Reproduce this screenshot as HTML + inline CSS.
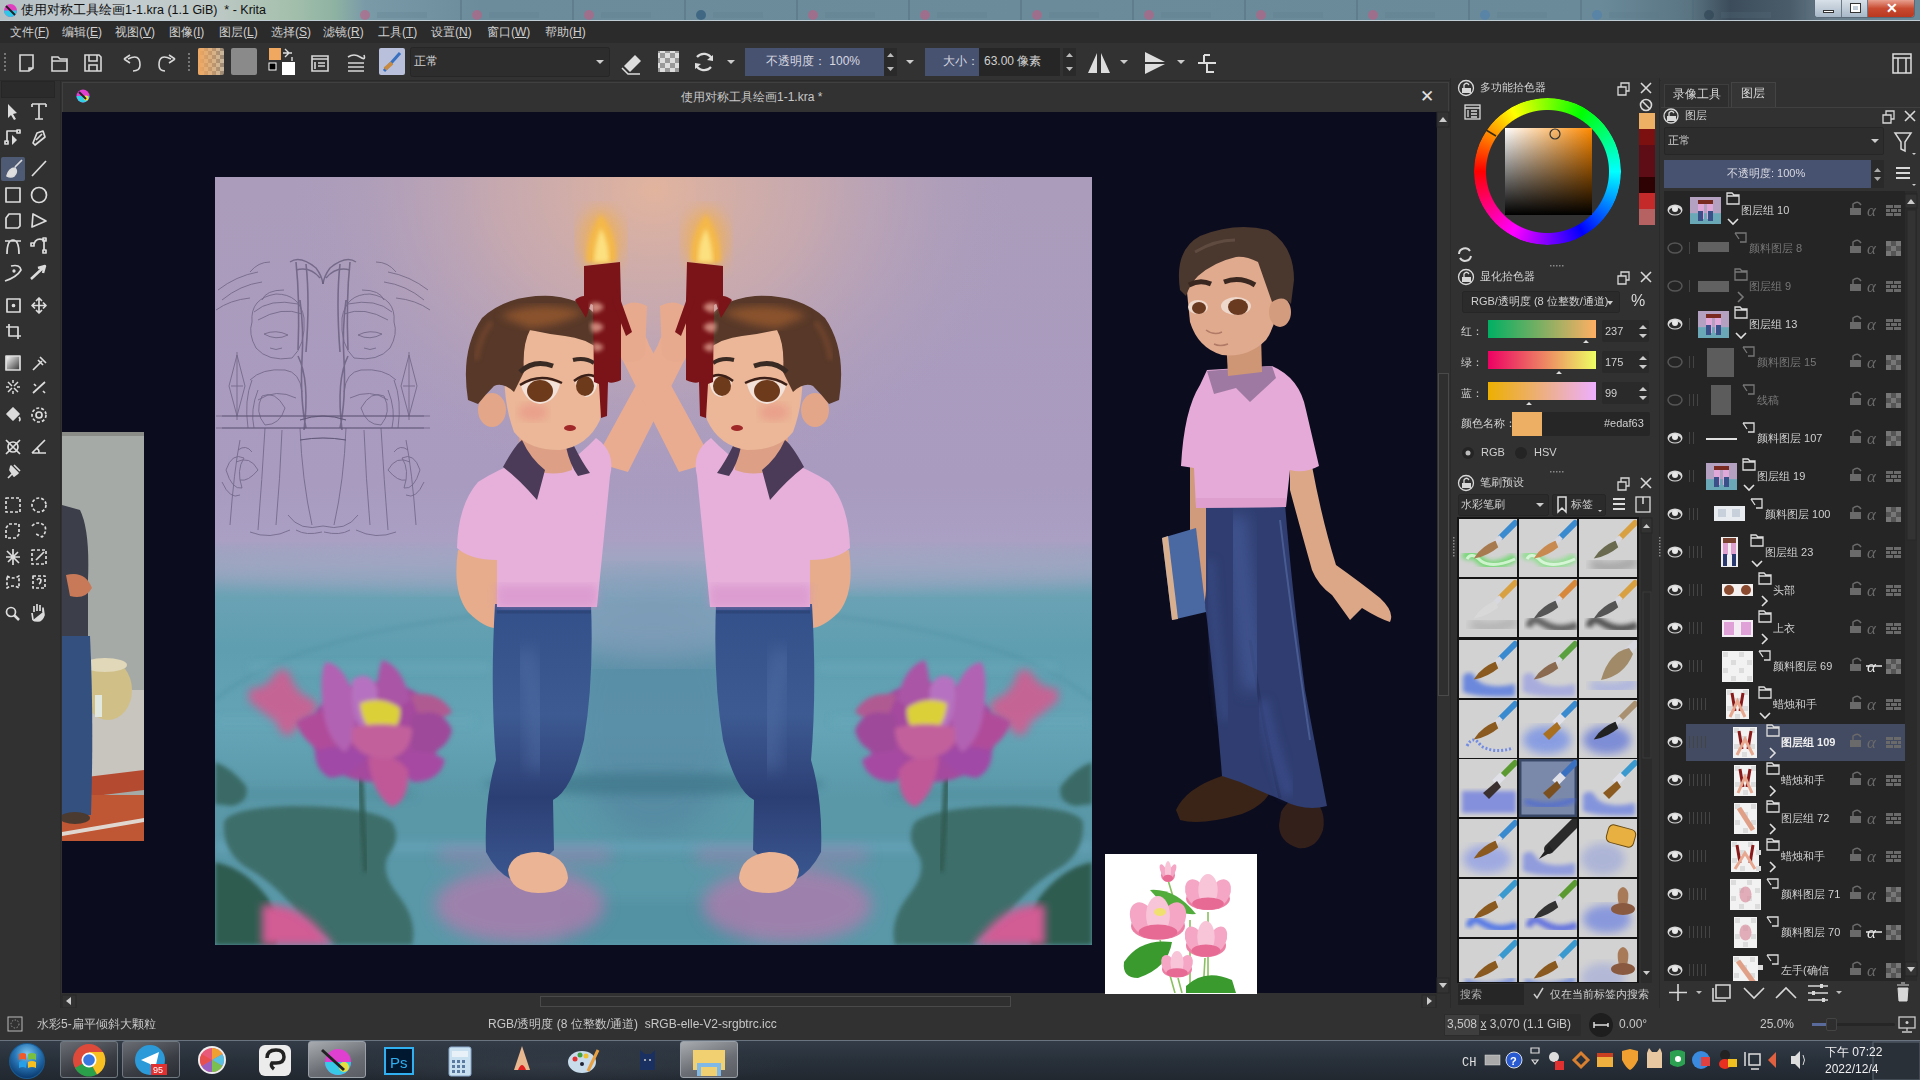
<!DOCTYPE html>
<html><head><meta charset="utf-8">
<style>
*{margin:0;padding:0;box-sizing:border-box}
html,body{width:1920px;height:1080px;overflow:hidden;background:#313131;font-family:"Liberation Sans",sans-serif;color:#d0d0d0;font-size:12px}
.a{position:absolute}
#title{left:0;top:0;width:1920px;height:21px;background:linear-gradient(90deg,#8a9a9a 0%,#9fb0a8 20%,#94b4a4 33%,#7d9aa8 38%,#6c8c9c 55%,#6a8898 80%,#6a8494 100%);border-bottom:1px solid #c8d4dc}
#menu{left:0;top:22px;width:1920px;height:21px;background:#2c2c2c}
#tb{left:0;top:43px;width:1920px;height:38px;background:#313131}
#tools{left:0;top:81px;width:60px;height:927px;background:#313131}
#tab{left:62px;top:82px;width:1387px;height:30px;background:#323232;border:1px solid #3d3d3d;border-bottom:none}
#canvas{left:62px;top:112px;width:1375px;height:881px;background:#0c0c1f;overflow:hidden}
#vscroll{left:1437px;top:112px;width:12px;height:881px;background:#2e2e2e}
#hscroll{left:62px;top:995px;width:1375px;height:13px;background:#2e2e2e}
#status{left:0;top:1008px;width:1920px;height:32px;background:#313131}
#taskbar{left:0;top:1040px;width:1920px;height:40px;background:linear-gradient(180deg,#3c4450 0%,#2a323c 40%,#1e242c 100%);border-top:1px solid #5a6470}
#dock1{left:1452px;top:78px;width:208px;height:930px;background:#313131}
#dock2{left:1661px;top:78px;width:259px;height:930px;background:#313131}
.t{position:absolute;white-space:nowrap;line-height:1}
</style></head><body>
<div id="canvas" class="a"></div>

<svg class="a" style="left:0;top:0" width="1920" height="1080" viewBox="0 0 1920 1080">
<defs>
 <clipPath id="pclip"><rect x="215" y="177" width="877" height="768"/></clipPath>
 <linearGradient id="sky" x1="0" y1="177" x2="0" y2="945" gradientUnits="userSpaceOnUse">
  <stop offset="0" stop-color="#ab9cbb"/>
  <stop offset="0.40" stop-color="#a99bc0"/>
  <stop offset="0.473" stop-color="#aaa0c4"/>
  <stop offset="0.502" stop-color="#94a4bc"/>
  <stop offset="0.546" stop-color="#6aa2b4"/>
  <stop offset="0.616" stop-color="#5e9eb0"/>
  <stop offset="0.72" stop-color="#64a4b6"/>
  <stop offset="0.81" stop-color="#5a98a8"/>
  <stop offset="1" stop-color="#5a98a8"/>
 </linearGradient>
 <radialGradient id="glow" cx="654" cy="190" r="330" gradientUnits="userSpaceOnUse" gradientTransform="translate(654 190) scale(1.1 0.9) translate(-654 -190)">
  <stop offset="0" stop-color="#e4b59c" stop-opacity="0.95"/>
  <stop offset="0.45" stop-color="#d6b0a8" stop-opacity="0.6"/>
  <stop offset="1" stop-color="#b0a0bc" stop-opacity="0"/>
 </radialGradient>
 <filter id="b2"><feGaussianBlur stdDeviation="2"/></filter>
 <filter id="b4"><feGaussianBlur stdDeviation="4"/></filter>
 <filter id="b8"><feGaussianBlur stdDeviation="8"/></filter>
 <filter id="b14"><feGaussianBlur stdDeviation="14"/></filter>
 <linearGradient id="pants" x1="0" y1="604" x2="0" y2="880" gradientUnits="userSpaceOnUse">
  <stop offset="0" stop-color="#34508a"/><stop offset="0.4" stop-color="#3d5a92"/><stop offset="0.7" stop-color="#2c3f74"/><stop offset="1" stop-color="#3a5790"/>
 </linearGradient>
 <linearGradient id="pad" x1="0" y1="0" x2="1" y2="1">
  <stop offset="0" stop-color="#3f6f6e"/><stop offset="1" stop-color="#3a6a60"/>
 </linearGradient>
</defs>

<!--PAINT_START--><!-- ===== painting ===== -->
<g clip-path="url(#pclip)">
 <rect x="215" y="177" width="877" height="768" fill="url(#sky)"/>
 <rect x="215" y="177" width="877" height="420" fill="url(#glow)"/>
 <!-- mist & pond -->
 <ellipse cx="654" cy="570" rx="520" ry="22" fill="#b2a8ca" opacity="0.4" filter="url(#b8)"/>
 <path d="M215 700 Q320 612 654 604 Q990 612 1092 700" fill="none" stroke="#4f8ea2" stroke-width="3" opacity="0.45" filter="url(#b2)"/>
 <ellipse cx="654" cy="720" rx="85" ry="120" fill="#5484a0" opacity="0.6" filter="url(#b14)"/>
 <ellipse cx="654" cy="615" rx="120" ry="45" fill="#88a0bc" opacity="0.75" filter="url(#b14)"/>
 <g filter="url(#b4)" opacity="0.65">
  <rect x="250" y="665" width="240" height="5" fill="#72aec0"/>
  <rect x="817" y="665" width="240" height="5" fill="#72aec0"/>
  <rect x="215" y="718" width="260" height="6" fill="#6aaabc"/>
  <rect x="832" y="718" width="260" height="6" fill="#6aaabc"/>
  <ellipse cx="654" cy="784" rx="170" ry="11" fill="#3e7488"/>
  <rect x="215" y="790" width="200" height="8" fill="#4f8d9c"/>
  <rect x="890" y="790" width="202" height="8" fill="#4f8d9c"/>
  <rect x="215" y="842" width="877" height="10" fill="#6aa6be"/>
  <rect x="560" y="900" width="190" height="45" fill="#4a8a9c" opacity="0.6"/>
 </g>
 <!-- pink reflections -->
 <g filter="url(#b8)" opacity="0.75">
  <ellipse cx="520" cy="905" rx="85" ry="38" fill="#b47aae"/>
  <ellipse cx="787" cy="905" rx="85" ry="38" fill="#b47aae"/>
  <rect x="440" y="848" width="170" height="14" fill="#b07ab0" opacity="0.7"/>
  <rect x="697" y="848" width="170" height="14" fill="#b07ab0" opacity="0.7"/>
 </g>
 <!-- sketch -->
 <g id="sk" fill="none" stroke="#4a4260" stroke-width="0.9" opacity="0.55">
  <path d="M252 322 Q250 298 276 294 Q300 294 304 318 Q306 345 292 358 Q268 362 256 348 Q248 334 252 322Z"/>
  <path d="M254 312 Q270 298 298 304 M258 320 Q282 306 302 314 M262 300 Q266 290 284 290"/>
  <path d="M264 334 Q276 329 288 335 Q276 341 264 334Z M270 348 Q276 351 282 348"/>
  <path d="M296 262 Q300 300 298 350 M306 264 Q310 300 306 352 M300 300 Q304 330 302 360" stroke-width="1.6"/>
  <path d="M290 262 Q300 255 316 268 Q322 276 323 284 M296 270 Q310 266 320 278" stroke-width="1.4"/>
  <path d="M298 356 Q310 380 304 430 M302 360 Q300 400 306 428" stroke-width="1.6"/>
  <path d="M250 380 Q262 368 285 370 Q300 372 302 392 M252 380 Q244 400 248 428 M258 390 Q250 410 254 428"/>
  <path d="M262 396 Q275 390 285 408 Q280 425 265 425 Q254 412 262 396Z"/>
  <path d="M265 428 Q262 480 258 530 M282 430 Q280 480 276 525 M300 428 Q302 480 312 525 M250 532 Q270 540 290 530 M296 530 Q306 536 322 532"/>
  <path d="M237 355 L229 386 L237 416 L245 386Z M237 352 V420 M231 386 H243"/>
  <path d="M222 416 H430 M222 428 H430 M300 420 Q323 412 346 420 M300 440 Q323 436 346 440"/>
  <path d="M226 470 Q232 452 244 458 Q236 470 242 488 Q232 490 226 470Z M236 462 Q250 455 258 470 Q248 482 240 480 M222 482 Q230 500 240 495 M238 450 Q246 444 252 452"/>
  <path d="M230 525 Q234 470 240 440 M222 300 Q240 285 262 282 M218 290 Q236 276 258 272 M216 310 Q230 300 250 298"/>
  <path d="M288 515 Q300 532 323 526"/>
  <path d="M250 272 Q258 262 270 262 M258 400 Q276 388 296 398"/>
 </g>
 <use href="#sk" transform="translate(646 0) scale(-1 1)"/>

 <g id="half">
  <!-- lily pads -->
  <path d="M224 822 Q230 808 290 806 Q370 806 392 822 Q402 838 388 856 Q380 872 398 895 Q418 920 412 945 L335 945 Q305 925 292 905 Q270 880 244 866 Q222 850 224 822Z" fill="#3e6e6a" filter="url(#b2)"/>
  <path d="M215 762 Q232 768 246 786 Q250 802 232 806 L215 804Z" fill="#3b6b66" filter="url(#b2)"/>
  <path d="M215 862 Q245 868 268 898 Q282 925 276 945 L215 945Z" fill="#2f5b50" filter="url(#b2)"/>
  <path d="M262 905 Q298 902 322 932 L334 945 L262 945Z" fill="#d25c94" filter="url(#b4)"/>
  <!-- pink blob -->
  <path d="M250 688 Q266 690 276 672 Q288 664 292 680 Q298 694 310 698 Q322 704 314 716 Q300 722 292 734 Q282 740 276 722 Q262 712 248 700Z" fill="#d65a90" filter="url(#b4)" opacity="0.85"/>
  <!-- stem -->
  <path d="M360 770 Q362 820 366 872" stroke="#2e5850" stroke-width="5" fill="none" filter="url(#b2)"/>
  <!-- lotus petals -->
  <g filter="url(#b2)">
   <ellipse cx="376" cy="732" rx="66" ry="50" fill="#a44a9e"/>
   <path d="M296 722 Q318 706 340 716 Q345 740 330 752 Q305 748 296 722Z" fill="#b04c9a"/>
   <path d="M410 695 Q440 690 452 712 Q445 720 420 718Z" fill="#b05a92"/>
   <path d="M413 715 Q442 705 452 730 Q448 752 418 756 Q405 740 413 715Z" fill="#9e4a9a"/>
   <path d="M315 752 Q340 740 368 752 Q360 775 330 778 Q315 770 315 752Z" fill="#a04aa6"/>
   <path d="M405 752 Q430 748 445 760 Q440 782 412 782 Q400 770 405 752Z" fill="#a64aa2"/>
   <path d="M368 758 Q395 752 408 770 Q410 800 392 807 Q372 795 368 758Z" fill="#c05898"/>
   <path d="M326 662 Q345 665 355 700 Q358 740 345 752 Q325 740 322 700 Q320 670 326 662Z" fill="#b262b2"/>
   <path d="M352 680 Q370 668 378 690 Q380 720 368 735 Q350 725 352 680Z" fill="#b672c0"/>
   <path d="M382 660 Q402 665 410 700 Q395 712 378 705 Q375 680 382 660Z" fill="#aa54a6"/>
   <path d="M360 703 Q382 695 400 708 Q402 730 382 736 Q362 730 360 703Z" fill="#dcd038"/>
   <path d="M352 728 Q380 720 412 728 Q412 752 392 758 Q362 760 352 742Z" fill="#c2609c"/>
  </g>

  <!-- boy -->
  <!-- back arm -->
  <path d="M458 550 Q452 592 468 612 Q486 630 500 628 L498 556Z" fill="#e6ac8c"/>
  <!-- raised arm (crossing) -->
  <path d="M594 462 L658 345 Q664 326 676 322 Q690 326 692 345 L628 472Z" fill="#e9ac90"/>
  <path d="M660 306 Q674 298 687 308 Q692 332 685 360 Q670 366 662 354Z" fill="#e8aa8e"/>
  <!-- pants -->
  <path d="M495 604 L591 604 Q594 680 584 740 Q572 790 553 800 L554 850 Q540 865 512 880 Q496 872 486 852 Q484 800 496 760 Q490 690 495 604Z" fill="url(#pants)"/>
  <path d="M522 650 Q540 700 538 770" stroke="#5572a8" stroke-width="24" fill="none" opacity="0.45" filter="url(#b8)"/>
  <path d="M497 612 H591" stroke="#2a4070" stroke-width="3" opacity="0.6"/>
  <!-- foot -->
  <path d="M508 870 Q512 852 538 852 Q566 855 568 878 Q566 893 538 893 Q510 892 508 870Z" fill="#ebb494"/>
  <!-- shirt -->
  <path d="M457 548 Q458 505 478 482 Q500 468 520 462 L560 468 Q580 455 596 438 Q616 452 610 476 L597 607 L497 607 L497 560 Q470 560 457 548Z" fill="#e6b0da"/>
  <path d="M497 585 L597 585 L597 607 L497 607Z" fill="#d48cc8" opacity="0.55" filter="url(#b4)"/>
  <!-- neck -->
  <path d="M518 430 L575 430 L572 470 Q545 480 522 462Z" fill="#dda086"/>
  <!-- collar -->
  <path d="M503 467 Q515 445 522 440 Q530 458 545 470 L537 500 Q520 480 503 467Z" fill="#4b3b58"/>
  <path d="M566 447 L574 446 Q582 462 590 473 L578 476 Q570 465 566 447Z" fill="#4b3b58"/>
  <!-- face -->
  <path d="M505 360 Q508 330 545 322 Q590 318 602 350 Q606 390 600 420 Q588 446 560 450 Q528 450 514 432 Q502 400 505 360Z" fill="#ebb798"/>
  <ellipse cx="492" cy="410" rx="14" ry="17" fill="#e3a688"/>
  <ellipse cx="533" cy="412" rx="15" ry="9" fill="#e88a80" opacity="0.5" filter="url(#b4)"/>
  <!-- hair -->
  <path d="M468 400 Q460 350 482 318 Q508 294 552 296 Q590 300 600 322 Q606 340 600 350 Q585 338 565 336 Q548 334 530 330 Q522 345 524 372 L514 392 Q503 382 494 386 Q486 394 478 404Z" fill="#573829"/>
  <path d="M500 316 Q535 298 585 312 Q560 326 530 328Z" fill="#94582e" opacity="0.85" filter="url(#b4)"/>
  <path d="M476 360 Q480 335 492 322" stroke="#7a4a2e" stroke-width="6" fill="none" opacity="0.6" filter="url(#b2)"/>
  <!-- brows eyes mouth -->
  <path d="M520 372 Q534 359 553 366" stroke="#3a2a24" stroke-width="5" fill="none"/>
  <path d="M573 360 Q585 357 594 363" stroke="#3a2a24" stroke-width="4" fill="none"/>
  <path d="M521 386 Q540 374 560 384 Q556 402 540 404 Q526 402 521 386Z" fill="#f2e2da"/>
  <ellipse cx="540" cy="391" rx="13" ry="11" fill="#6e3a1c"/>
  <path d="M520 385 Q540 372 562 383" stroke="#3a2018" stroke-width="2.5" fill="none"/>
  <path d="M575 382 Q588 372 598 380 Q596 396 586 397 Q577 394 575 382Z" fill="#f2e2da"/>
  <ellipse cx="585" cy="386" rx="9" ry="10" fill="#6e3a1c"/>
  <path d="M574 381 Q588 370 599 379" stroke="#3a2018" stroke-width="2.5" fill="none"/>
  <ellipse cx="570" cy="428" rx="6" ry="3" fill="#a02828"/>
 </g>
 <use href="#half" transform="translate(1307 0) scale(-1 1)"/>
 <g id="cand">
  <ellipse cx="601" cy="240" rx="22" ry="32" fill="#f0b050" opacity="0.7" filter="url(#b8)"/>
  <path d="M586 262 Q586 236 601 214 Q618 236 616 262Z" fill="#f4b848" filter="url(#b2)"/>
  <path d="M594 262 Q595 242 601 228 Q609 242 609 262Z" fill="#fce080" filter="url(#b2)"/>
  <path d="M584 266 L620 262 L621 300 L621 380 Q612 384 608 382 L607 416 L601 418 L599 384 L594 382 L593 305 L584 300Z" fill="#7a1418"/>
  <path d="M575 300 Q585 292 592 300 L586 318Z" fill="#7a1418"/>
  <path d="M617 290 L632 332 L626 336 L612 300Z" fill="#7a1418"/>
  <path d="M590 304 Q598 300 604 307 Q599 314 592 312Z M590 324 Q598 320 604 327 Q599 334 592 332Z M592 344 Q598 341 604 347 Q599 353 594 351Z" fill="#e2a292" opacity="0.8" filter="url(#b2)"/>
 </g>
 <use href="#cand" transform="translate(1307 0) scale(-1 1)"/>
</g>
<!--PAINT_END-->
<!-- ===== left photo ===== -->
<g>
 <clipPath id="phclip"><rect x="62" y="432" width="82" height="409"/></clipPath>
 <g clip-path="url(#phclip)">
  <rect x="62" y="432" width="82" height="409" fill="#a6aaa6"/>
  <rect x="62" y="432" width="82" height="4" fill="#8a8c88"/>
  <rect x="62" y="690" width="82" height="100" fill="#c8c4be"/>
  <path d="M62 780 L144 770 L144 790 L62 800Z" fill="#b44a30"/>
  <rect x="62" y="795" width="82" height="46" fill="#bf5634"/>
  <path d="M62 832 L144 818 L144 822 L62 836Z" fill="#e0d8d0"/>
  <ellipse cx="108" cy="690" rx="24" ry="30" fill="#d0c088"/>
  <ellipse cx="105" cy="665" rx="22" ry="7" fill="#e0d8b8"/>
  <rect x="95" y="695" width="7" height="22" fill="#e0e8e0"/>
  <path d="M62 505 L80 510 Q90 530 88 580 L88 640 L62 642Z" fill="#3c3e4a"/>
  <path d="M66 575 Q85 570 92 588 Q85 600 70 596Z" fill="#c87a58"/>
  <path d="M62 636 L90 636 Q94 720 91 815 L62 815Z" fill="#34507e"/>
  <ellipse cx="75" cy="818" rx="15" ry="6" fill="#4a3a30"/>
 </g>
</g>

<!--CHAR_START--><!-- ===== right character ===== -->
<g>
 <!-- shoes -->
 <path d="M1176 810 Q1186 788 1222 776 Q1260 768 1272 782 Q1272 802 1242 814 Q1200 826 1180 820Z" fill="#3a2418"/>
 <path d="M1281 812 Q1290 795 1310 797 Q1327 808 1323 830 Q1316 850 1298 848 Q1279 842 1279 825Z" fill="#34201a"/>
 <!-- pants -->
 <path d="M1199 506 L1285 504 Q1292 590 1305 690 Q1318 760 1327 806 Q1305 812 1282 800 Q1262 792 1240 782 L1222 776 Q1216 700 1207 620 Q1198 560 1199 506Z" fill="#2f3d70"/>
 <path d="M1250 640 Q1262 720 1280 798" stroke="#26325e" stroke-width="3" fill="none" opacity="0.7"/>
 <path d="M1235 515 Q1242 600 1255 690" stroke="#4a60a0" stroke-width="26" fill="none" opacity="0.6" filter="url(#b8)"/>
 <path d="M1262 700 Q1272 750 1290 795" stroke="#3c5090" stroke-width="14" fill="none" opacity="0.6" filter="url(#b4)"/>
 <path d="M1210 560 Q1215 640 1226 720" stroke="#3c5290" stroke-width="10" fill="none" opacity="0.5" filter="url(#b4)"/>
 <path d="M1280 520 Q1292 620 1310 740" stroke="#5a70a8" stroke-width="2" fill="none" opacity="0.6"/>
 <!-- right arm -->
 <path d="M1290 460 L1312 466 Q1322 520 1336 565 Q1360 582 1380 598 Q1395 612 1390 622 Q1378 618 1362 608 L1350 620 Q1340 606 1332 595 Q1318 585 1312 570 Q1298 520 1290 490Z" fill="#dba786"/>
 <!-- left arm & book -->
 <path d="M1190 462 L1206 462 L1206 590 Q1205 612 1195 612 L1190 600Z" fill="#d09a7c"/>
 <path d="M1162 538 L1196 528 L1206 612 L1172 620Z" fill="#4a68a2"/>
 <path d="M1162 538 L1168 536 L1178 619 L1172 620Z" fill="#d8b090"/>
 <!-- shirt -->
 <path d="M1207 370 L1272 366 Q1300 378 1306 410 L1319 466 Q1304 474 1290 470 L1286 507 L1196 508 L1194 468 L1181 466 Q1184 410 1200 385Z" fill="#e6aad8"/>
 <path d="M1207 371 L1272 366 L1276 378 L1250 402 L1236 388 L1214 394Z" fill="#9e7aa2"/>
 <path d="M1196 498 L1286 498 L1286 507 L1196 508Z" fill="#d898c8" opacity="0.6"/>
 <!-- neck & head -->
 <path d="M1226 338 L1261 334 L1262 372 L1228 376Z" fill="#cf9676"/>
 <path d="M1186 282 Q1190 256 1225 252 Q1268 252 1278 282 Q1280 320 1266 340 Q1248 358 1222 355 Q1198 348 1190 322Z" fill="#e0aa8e"/>
 <ellipse cx="1280" cy="312" rx="11" ry="15" fill="#d49c7e"/>
 <path d="M1180 290 Q1174 250 1200 236 Q1235 222 1268 230 Q1294 245 1294 280 L1291 304 Q1283 294 1272 302 L1258 262 Q1246 256 1236 257 Q1214 262 1198 276 Q1190 284 1186 296Z" fill="#4a372e"/>
 <path d="M1195 252 Q1215 240 1235 240" stroke="#6a5448" stroke-width="3" fill="none" opacity="0.7"/>
 <path d="M1189 285 Q1200 279 1211 284" stroke="#3a2820" stroke-width="5" fill="none"/>
 <path d="M1224 282 Q1240 276 1255 285" stroke="#3a2820" stroke-width="5" fill="none"/>
 <ellipse cx="1198" cy="307" rx="10" ry="7" fill="#eed8cc"/>
 <ellipse cx="1199" cy="308" rx="7" ry="6" fill="#6a3a20"/>
 <ellipse cx="1236" cy="306" rx="15" ry="9" fill="#eed8cc"/>
 <ellipse cx="1238" cy="307" rx="10" ry="8" fill="#6a3a20"/>
 <path d="M1206 330 Q1214 336 1222 332 M1214 344 Q1220 347 1228 344" stroke="#b07a66" stroke-width="1.5" fill="none"/>
</g>
<!--CHAR_END-->
<!-- ===== flower reference image ===== -->
<g>
 <rect x="1105" y="854" width="152" height="140" fill="#ffffff"/>
 <clipPath id="flclip"><rect x="1105" y="854" width="152" height="139"/></clipPath>
 <g clip-path="url(#flclip)">
  <path d="M1168 880 L1180 920 M1208 912 L1208 993 M1160 940 L1175 993 M1205 958 L1203 993 M1178 978 L1182 993 M1190 920 L1190 993" stroke="#8ac060" stroke-width="1.6"/>
  <path d="M1124 962 Q1140 938 1172 942 Q1168 968 1138 978 Q1122 978 1124 962Z" fill="#3a9a2e"/>
  <path d="M1186 986 Q1205 968 1232 980 L1236 993 L1186 993Z" fill="#3a9a2e"/>
  <path d="M1150 890 Q1175 888 1196 914 Q1172 916 1150 890Z" fill="#52ac3c"/>
<ellipse cx="1168" cy="875.3" rx="7.0" ry="6.6" fill="#ec80a4"/>
<ellipse cx="1164.1" cy="872.0" rx="3.1" ry="8.4" fill="#f4a6c4" transform="rotate(-25 1164.1 872.0)"/>
<ellipse cx="1171.9" cy="872.0" rx="3.1" ry="8.4" fill="#f4a6c4" transform="rotate(25 1171.9 872.0)"/>
<ellipse cx="1168" cy="870.2" rx="3.1" ry="9.2" fill="#f8c4d8"/>
<ellipse cx="1168" cy="878.2" rx="5.0" ry="3.5" fill="#e66a94"/>
<ellipse cx="1208" cy="898.7" rx="22.0" ry="11.4" fill="#ec80a4"/>
<ellipse cx="1195.7" cy="893.0" rx="9.7" ry="14.4" fill="#f4a6c4" transform="rotate(-25 1195.7 893.0)"/>
<ellipse cx="1220.3" cy="893.0" rx="9.7" ry="14.4" fill="#f4a6c4" transform="rotate(25 1220.3 893.0)"/>
<ellipse cx="1208" cy="890.0" rx="9.7" ry="16.0" fill="#f8c4d8"/>
<ellipse cx="1208" cy="903.6" rx="15.8" ry="6.1" fill="#e66a94"/>
<ellipse cx="1158" cy="925.9" rx="27.0" ry="13.8" fill="#ec80a4"/>
<ellipse cx="1142.9" cy="919.0" rx="11.9" ry="17.5" fill="#f4a6c4" transform="rotate(-25 1142.9 919.0)"/>
<ellipse cx="1173.1" cy="919.0" rx="11.9" ry="17.5" fill="#f4a6c4" transform="rotate(25 1173.1 919.0)"/>
<ellipse cx="1158" cy="915.3" rx="11.9" ry="19.3" fill="#f8c4d8"/>
<ellipse cx="1158" cy="931.9" rx="19.4" ry="7.4" fill="#e66a94"/>
<ellipse cx="1206" cy="945.7" rx="20.0" ry="11.4" fill="#ec80a4"/>
<ellipse cx="1194.8" cy="940.0" rx="8.8" ry="14.4" fill="#f4a6c4" transform="rotate(-25 1194.8 940.0)"/>
<ellipse cx="1217.2" cy="940.0" rx="8.8" ry="14.4" fill="#f4a6c4" transform="rotate(25 1217.2 940.0)"/>
<ellipse cx="1206" cy="937.0" rx="8.8" ry="16.0" fill="#f8c4d8"/>
<ellipse cx="1206" cy="950.6" rx="14.4" ry="6.1" fill="#e66a94"/>
<ellipse cx="1177" cy="969.2" rx="15.0" ry="8.4" fill="#ec80a4"/>
<ellipse cx="1168.6" cy="965.0" rx="6.6" ry="10.6" fill="#f4a6c4" transform="rotate(-25 1168.6 965.0)"/>
<ellipse cx="1185.4" cy="965.0" rx="6.6" ry="10.6" fill="#f4a6c4" transform="rotate(25 1185.4 965.0)"/>
<ellipse cx="1177" cy="962.8" rx="6.6" ry="11.8" fill="#f8c4d8"/>
<ellipse cx="1177" cy="972.8" rx="10.8" ry="4.5" fill="#e66a94"/>
  <ellipse cx="1160" cy="912" rx="6" ry="4" fill="#f0e070"/>
 </g>
</g>
</svg>


<!-- title bar -->
<div class="a" style="left:0;top:0;width:1920px;height:21px;overflow:hidden;background:linear-gradient(90deg,#b4c0c4 0,#c4ccd0 120px,#bcc8c4 220px,#a4c0ac 290px,#8eb2a2 335px,#7a9aa8 365px,#6c8c9c 480px,#6a8a9a 1600px,#5a7482 1690px,#3c4c5a 1730px,#4a5c6a 1790px,#6a7e8c 1830px,#6a8a9a 1920px);border-bottom:1px solid #c0ccd4">
 <svg width="1920" height="21" style="position:absolute;left:0;top:0"><circle cx="365" cy="15" r="5" fill="#c85a80" opacity="0.55"/><rect x="377" y="12" width="50" height="6" fill="#5a7888" opacity="0.2"/><rect x="460" y="0" width="2" height="21" fill="#506a78" opacity="0.4"/><circle cx="477" cy="15" r="5" fill="#c85a80" opacity="0.55"/><rect x="489" y="12" width="50" height="6" fill="#5a7888" opacity="0.2"/><rect x="572" y="0" width="2" height="21" fill="#506a78" opacity="0.4"/><circle cx="589" cy="15" r="5" fill="#c85a80" opacity="0.55"/><rect x="601" y="12" width="50" height="6" fill="#5a7888" opacity="0.2"/><rect x="684" y="0" width="2" height="21" fill="#506a78" opacity="0.4"/><circle cx="701" cy="15" r="5" fill="#1e4a70" opacity="0.55"/><rect x="713" y="12" width="50" height="6" fill="#5a7888" opacity="0.2"/><rect x="796" y="0" width="2" height="21" fill="#506a78" opacity="0.4"/><circle cx="813" cy="15" r="5" fill="#c85a80" opacity="0.55"/><rect x="825" y="12" width="50" height="6" fill="#5a7888" opacity="0.2"/><rect x="908" y="0" width="2" height="21" fill="#506a78" opacity="0.4"/><circle cx="925" cy="15" r="5" fill="#c85a80" opacity="0.55"/><rect x="937" y="12" width="50" height="6" fill="#5a7888" opacity="0.2"/><rect x="1020" y="0" width="2" height="21" fill="#506a78" opacity="0.4"/><circle cx="1037" cy="15" r="5" fill="#c85a80" opacity="0.55"/><rect x="1049" y="12" width="50" height="6" fill="#5a7888" opacity="0.2"/><rect x="1132" y="0" width="2" height="21" fill="#506a78" opacity="0.4"/><circle cx="1149" cy="15" r="5" fill="#c85a80" opacity="0.55"/><rect x="1161" y="12" width="50" height="6" fill="#5a7888" opacity="0.2"/><rect x="1244" y="0" width="2" height="21" fill="#506a78" opacity="0.4"/><circle cx="1261" cy="15" r="5" fill="#c85a80" opacity="0.55"/><rect x="1273" y="12" width="50" height="6" fill="#5a7888" opacity="0.2"/><rect x="1356" y="0" width="2" height="21" fill="#506a78" opacity="0.4"/><circle cx="1373" cy="15" r="5" fill="#c85a80" opacity="0.55"/><rect x="1385" y="12" width="50" height="6" fill="#5a7888" opacity="0.2"/><rect x="1468" y="0" width="2" height="21" fill="#506a78" opacity="0.4"/><circle cx="1485" cy="15" r="5" fill="#4a80b0" opacity="0.55"/><rect x="1497" y="12" width="50" height="6" fill="#5a7888" opacity="0.2"/><rect x="1580" y="0" width="2" height="21" fill="#506a78" opacity="0.4"/><circle cx="1597" cy="15" r="5" fill="#4a80b0" opacity="0.55"/><rect x="1609" y="12" width="50" height="6" fill="#5a7888" opacity="0.2"/><rect x="1692" y="0" width="2" height="21" fill="#506a78" opacity="0.4"/><circle cx="1709" cy="15" r="5" fill="#2a4050" opacity="0.55"/><rect x="1721" y="12" width="50" height="6" fill="#5a7888" opacity="0.2"/><rect x="1804" y="0" width="2" height="21" fill="#506a78" opacity="0.4"/></svg>
 <svg class="a" style="left:3px;top:3px" width="15" height="15" viewBox="0 0 15 15">
  <circle cx="7.5" cy="7.5" r="6.5" fill="#e040c0"/><path d="M1 7.5 A6.5 6.5 0 0 0 14 7.5Z" fill="#30c8e8"/><path d="M3 3 L12 12" stroke="#222" stroke-width="2"/>
 </svg>
 <div class="t" style="left:21px;top:4px;font-size:12.5px;color:#101010">使用对称工具绘画1-1.kra (1.1 GiB)&nbsp; * - Krita</div>
 <!-- window buttons -->
 <div class="a" style="left:1814px;top:0;width:101px;height:18px;border:1px solid #5a6a78;border-top:none;border-radius:0 0 4px 4px;overflow:hidden;background:#a8b8c8">
  <div class="a" style="left:0;top:0;width:27px;height:17px;background:linear-gradient(#d8e0e8,#a8b8c8);border-right:1px solid #6a7a88"></div>
  <div class="a" style="left:27px;top:0;width:26px;height:17px;background:linear-gradient(#d8e0e8,#a8b8c8);border-right:1px solid #6a7a88"></div>
  <div class="a" style="left:53px;top:0;width:47px;height:17px;background:linear-gradient(#e8a090,#c84a30 50%,#b83820)"></div>
  <div class="a" style="left:8px;top:10px;width:11px;height:3px;background:#fff;border:1px solid #333"></div>
  <div class="a" style="left:36px;top:4px;width:9px;height:8px;border:2px solid #fff;outline:1px solid #333"></div>
  <div class="t" style="left:71px;top:1px;font-size:14px;font-weight:bold;color:#fff">✕</div>
 </div>
</div>
<!-- menu -->
<div class="a" style="left:0;top:21px;width:1920px;height:22px;background:#2b2b2b">
 <div class="t" style="left:10px;top:5px;font-size:12px;color:#cfcfcf;word-spacing:0">文件(<u>F</u>)</div>
 <div class="t" style="left:62px;top:5px;font-size:12px;color:#cfcfcf">编辑(<u>E</u>)</div>
 <div class="t" style="left:115px;top:5px;font-size:12px;color:#cfcfcf">视图(<u>V</u>)</div>
 <div class="t" style="left:169px;top:5px;font-size:12px;color:#cfcfcf">图像(<u>I</u>)</div>
 <div class="t" style="left:219px;top:5px;font-size:12px;color:#cfcfcf">图层(<u>L</u>)</div>
 <div class="t" style="left:271px;top:5px;font-size:12px;color:#cfcfcf">选择(<u>S</u>)</div>
 <div class="t" style="left:323px;top:5px;font-size:12px;color:#cfcfcf">滤镜(<u>R</u>)</div>
 <div class="t" style="left:378px;top:5px;font-size:12px;color:#cfcfcf">工具(<u>T</u>)</div>
 <div class="t" style="left:431px;top:5px;font-size:12px;color:#cfcfcf">设置(<u>N</u>)</div>
 <div class="t" style="left:487px;top:5px;font-size:12px;color:#cfcfcf">窗口(<u>W</u>)</div>
 <div class="t" style="left:545px;top:5px;font-size:12px;color:#cfcfcf">帮助(<u>H</u>)</div>
</div>
<!-- toolbar -->
<div class="a" style="left:0;top:43px;width:1920px;height:38px;background:#323232;border-bottom:1px solid #2a2a2a">
 <svg class="a" style="left:0;top:0" width="1920" height="38">
  <g fill="#777"><rect x="4" y="10" width="2" height="2"/><rect x="4" y="14" width="2" height="2"/><rect x="4" y="18" width="2" height="2"/><rect x="4" y="22" width="2" height="2"/><rect x="4" y="26" width="2" height="2"/>
  <rect x="188" y="10" width="2" height="2"/><rect x="188" y="14" width="2" height="2"/><rect x="188" y="18" width="2" height="2"/><rect x="188" y="22" width="2" height="2"/><rect x="188" y="26" width="2" height="2"/></g>
  <g fill="none" stroke="#d8d8d8" stroke-width="1.6">
   <path d="M20 12 H33 V25 L29 28 H20Z M29 28 V25 H33"/>
   <path d="M52 14 H58 L60 16 H67 V28 H52Z M52 18 H67"/>
   <path d="M85 12 H99 L101 14 V28 H85Z M89 12 V18 H97 V12 M89 28 V22 H97 V28"/>
   <path d="M128 16 Q140 10 140 22 Q140 28 133 28"/><path d="M124 16 L130 12 M124 16 L130 20"/>
   <path d="M171 16 Q159 10 159 22 Q159 28 165 28"/><path d="M175 16 L169 12 M175 16 L169 20"/>
   <path d="M312 13 H328 V28 H312Z M312 16 H328 M315 19 V26 M318 20 H325 M318 23 H325"/>
   <path d="M348 14 Q354 10 360 14 Q366 18 364 12 M348 20 H364 M348 24 H364 M348 28 H364"/>
  </g>
  <!-- gradient preset -->
  <defs><pattern id="chk" width="8" height="8" patternUnits="userSpaceOnUse"><rect width="8" height="8" fill="#c8b8a0"/><rect width="4" height="4" fill="#9a8a78"/><rect x="4" y="4" width="4" height="4" fill="#9a8a78"/></pattern>
  <linearGradient id="og" x1="0" x2="1"><stop offset="0" stop-color="#f0a860"/><stop offset="1" stop-color="#f0a860" stop-opacity="0"/></linearGradient>
  <pattern id="chk2" width="10" height="10" patternUnits="userSpaceOnUse"><rect width="10" height="10" fill="#ddd"/><rect width="5" height="5" fill="#999"/><rect x="5" y="5" width="5" height="5" fill="#999"/></pattern></defs>
  <rect x="198" y="5" width="26" height="27" rx="2" fill="url(#chk)"/><rect x="198" y="5" width="26" height="27" rx="2" fill="url(#og)"/>
  <rect x="231" y="5" width="26" height="27" rx="2" fill="#8a8a8a"/>
  <rect x="269" y="5" width="12" height="12" fill="#f0a860"/>
  <rect x="282" y="19" width="13" height="13" fill="#fff"/>
  <rect x="269" y="20" width="7" height="7" fill="#000" stroke="#fff" stroke-width="1"/>
  <path d="M285 6 L289 10 L285 14 M283 10 H292 M292 14 V18" stroke="#ddd" stroke-width="1.4" fill="none"/>
  <rect x="379" y="5" width="26" height="27" rx="2" fill="#b8c0dc"/>
  <path d="M384 28 L400 10" stroke="#3a70c0" stroke-width="3"/><path d="M385 26 L392 20" stroke="#c88a40" stroke-width="4"/>
  <!-- dropdown -->
  <rect x="410.5" y="4.5" width="199" height="29" rx="2" fill="#2d2d2d" stroke="#262626"/>
  <path d="M596 17 L604 17 L600 21Z" fill="#ccc"/>
  <!-- eraser etc -->
  <path d="M624 23 L635 12 L641 18 L630 29Z" fill="#ddd"/><path d="M622 25 L628 31 H640" stroke="#ddd" stroke-width="1.5" fill="none"/>
  <rect x="658" y="8" width="21" height="21" fill="url(#chk2)"/>
  <path d="M697 14 A9 9 0 0 1 712 16 M711 24 A9 9 0 0 1 696 22" stroke="#ddd" stroke-width="2.2" fill="none"/><path d="M713 12 L713 18 L707 17Z M695 26 L695 20 L701 21Z" fill="#ddd"/>
  <path d="M727 17 L735 17 L731 21Z" fill="#ccc"/>
  <!-- opacity -->
  <rect x="745" y="5" width="139" height="28" fill="#475271"/>
  <rect x="884" y="5" width="13" height="28" fill="#2a2a2a"/>
  <path d="M887 14 L894 14 L890.5 10Z M887 24 L894 24 L890.5 28Z" fill="#bbb"/>
  <path d="M906 17 L914 17 L910 21Z" fill="#ccc"/>
  <!-- size -->
  <rect x="925" y="5" width="54" height="28" fill="#475271"/>
  <rect x="979" y="5" width="81" height="28" fill="#262626"/>
  <rect x="1063" y="5" width="13" height="28" fill="#2a2a2a"/>
  <path d="M1066 14 L1073 14 L1069.5 10Z M1066 24 L1073 24 L1069.5 28Z" fill="#bbb"/>
  <!-- mirror -->
  <path d="M1097 10 L1097 30 L1088 30Z M1101 10 L1101 30 L1110 30Z" fill="#ddd"/>
  <path d="M1120 17 L1128 17 L1124 21Z" fill="#ccc"/>
  <path d="M1145 9 L1165 19 L1145 19Z M1145 21 L1165 21 L1145 31Z" fill="#ddd"/>
  <path d="M1177 17 L1185 17 L1181 21Z" fill="#ccc"/>
  <path d="M1198 20 H1216 M1204 12 V20 M1204 12 H1210 M1207 20 V29 H1214" stroke="#ddd" stroke-width="2" fill="none"/>
  <!-- right icon -->
  <path d="M1893 11 H1911 V30 H1893Z M1893 15 H1911 M1898 15 V30 M1906 15 V30" stroke="#ddd" stroke-width="1.5" fill="none"/>
 </svg>
 <div class="t" style="left:414px;top:12px;font-size:12px;color:#d0d0d0">正常</div>
 <div class="t" style="left:766px;top:12px;font-size:12px;color:#d8d8e0">不透明度：&nbsp;100%</div>
 <div class="t" style="left:943px;top:12px;font-size:12px;color:#d8d8e0">大小：</div>
 <div class="t" style="left:984px;top:12px;font-size:12px;color:#d0d0d0">63.00 像素</div>
</div>
<!-- canvas tab -->
<div class="a" style="left:62px;top:82px;width:1387px;height:30px;background:#323232;border:1px solid #404040;border-bottom:none">
 <svg class="a" style="left:13px;top:6px" width="14" height="14" viewBox="0 0 14 14"><circle cx="7" cy="7" r="6.5" fill="#e040d0"/><path d="M0.5 7 A6.5 6.5 0 0 0 13.5 7 L7 7Z" fill="#30d0e8"/><circle cx="10" cy="9" r="2.5" fill="#f0e040"/><path d="M3 3 L10 10" stroke="#222" stroke-width="2"/></svg>
 <div class="t" style="left:618px;top:8px;font-size:12px;color:#c8c8c8">使用对称工具绘画1-1.kra *</div>
 <div class="t" style="left:1357px;top:5px;font-size:17px;color:#e0e0e0">✕</div>
</div>

<!-- toolbox -->
<div class="a" style="left:0;top:81px;width:61px;height:927px;background:#313131;border-right:1px solid #2a2a2a">
 <div class="a" style="left:1px;top:0px;width:54px;height:17px;background:#2b2b2b;border:1px solid #262626"></div>
 <div class="a" style="left:1px;top:76px;width:24px;height:24px;background:#4e5a74;border-radius:2px"></div>
 <svg class="a" style="left:0;top:0" width="60" height="927" viewBox="0 81 60 927">
 <g fill="none" stroke="#dcdcdc" stroke-width="1.7" stroke-linejoin="round">
  <!-- row1 -->
  <path d="M8 104 L8 118 L11 115 L14 120 L16 119 L13 114 L17 113Z" fill="#dcdcdc" stroke="none"/>
  <path d="M32 104 H46 M39 104 V119 M35 119 H43 M32 104 V107 M46 104 V107"/>
  <!-- row2 -->
  <path d="M7 142 V131 H18"/><rect x="5" y="141" width="3" height="3"/><rect x="17" y="130" width="3" height="3"/><path d="M12 135 L12 145 L17 140Z" fill="#dcdcdc" stroke="none"/>
  <path d="M33 143 L37 133 L43 131 L45 137 L35 145Z M36 140 L42 134"/>
  <!-- row3 brush -->
  <path d="M7 176 Q9 168 15 168 Q18 172 14 176 Q11 178 7 176Z M15 167 L22 160" fill="#e0e0e0"/>
  <path d="M32 176 L46 161"/>
  <!-- row4 -->
  <rect x="6" y="188" width="14" height="14"/>
  <circle cx="39" cy="195" r="7.5"/>
  <!-- row5 -->
  <path d="M9 214 H20 V226 L18 228 H6 V218Z"/>
  <path d="M32 227 L46 221 L33 214Z"/>
  <!-- row6 -->
  <path d="M7 254 Q7 240 13 240 Q19 240 19 254 M5 241 H21"/>
  <path d="M34 244 Q36 237 44 240 L44 250"/><rect x="31" y="243" width="3" height="3"/><rect x="43" y="238" width="3" height="3"/><rect x="43" y="250" width="3" height="3"/>
  <!-- row7 -->
  <path d="M5 281 Q17 277 21 270 Q20 264 11 266"/><circle cx="14" cy="271" r="0.8" fill="#dcdcdc"/>
  <path d="M31 279 L45 266 L38 268 M45 266 L43 273" stroke-width="2.5"/>
  <!-- row8 transform / move -->
  <rect x="7" y="299" width="13" height="13"/><circle cx="13.5" cy="305.5" r="1" fill="#dcdcdc"/>
  <path d="M39 298 V313 M32 305.5 H46 M36 301 L39 298 L42 301 M36 310 L39 313 L42 310 M35 302.5 L32 305.5 L35 308.5 M43 302.5 L46 305.5 L43 308.5"/>
  <!-- row9 crop -->
  <path d="M9 324 V336 H21 M6 327 H18 V339"/>
  <!-- row10 gradient / picker -->
  <rect x="6" y="356" width="14" height="14" fill="url(#tgrad)"/>
  <path d="M33 370 L42 361 M40 357 L46 363 M38 360 L43 365"/>
  <!-- row11 -->
  <path d="M8 382 L12 386 M18 392 L14 388 M8 392 L12 388 M18 382 L14 386 M13 380 V383 M13 391 V394 M6 387 H9 M17 387 H20" stroke-width="1.5"/>
  <path d="M33 393 L45 382 M34 384 L36 386 M43 391 L45 393"/>
  <!-- row12 fill / enclose -->
  <path d="M7 414 L13 408 L19 414 L13 420Z M19 417 Q21 420 19 421" fill="#dcdcdc"/>
  <circle cx="39" cy="415" r="7" stroke-dasharray="3 2"/><circle cx="39" cy="415" r="3"/>
  <!-- row13 assistant / measure -->
  <path d="M6 440 L20 454 M20 440 L6 454"/><circle cx="13" cy="447" r="5"/>
  <path d="M32 453 H46 M32 453 L45 440 M39 453 Q39 448 36 449"/>
  <!-- row14 reference -->
  <path d="M8 478 L13 473 M11 466 L18 473 L14 476 L10 470Z M14 465 L20 471" fill="#dcdcdc"/>
  <!-- row15 selections -->
  <rect x="6" y="498" width="14" height="14" stroke-dasharray="3 2"/>
  <circle cx="39" cy="505" r="7" stroke-dasharray="3 2"/>
  <path d="M9 524 H19 V534 L16 538 H6 V528Z" stroke-dasharray="3 2"/>
  <path d="M32 526 Q38 520 45 526 Q47 532 42 537 L36 534" stroke-dasharray="3 2"/>
  <path d="M7 551 L19 563 M13 549 V565 M6 557 H20 M8 562 L18 552"/>
  <rect x="32" y="550" width="14" height="14" stroke-dasharray="3 2"/><path d="M36 560 L44 552"/>
  <path d="M7 576 Q13 580 19 576 V588 Q13 584 7 588Z" stroke-dasharray="3 2"/>
  <path d="M33 576 H45 V588 H33Z" stroke-dasharray="3 2"/><path d="M37 580 Q39 577 41 580 Q41 583 39 584"/>
  <!-- zoom / pan -->
  <circle cx="11" cy="612" r="4.5"/><path d="M14 615 L19 620" stroke-width="2.5"/>
  <path d="M33 620 L32 613 M34 612 V606 M37 611 V604 M40 611 V605 M43 612 V608 L44 615 Q42 621 38 621 Q34 621 33 620" fill="#dcdcdc"/>
 </g>
 <defs><linearGradient id="tgrad" x1="0" x2="1" y1="0" y2="1"><stop offset="0" stop-color="#fff"/><stop offset="1" stop-color="#333"/></linearGradient></defs>
 </svg>
</div>

<!-- dock1 -->
<div class="a" style="left:1450px;top:78px;width:210px;height:930px;background:#313131;border-left:1px solid #2a2a2a;border-right:1px solid #2a2a2a">
</div>
<div class="a" style="left:1474px;top:98px;width:147px;height:147px;border-radius:50%;background:conic-gradient(from 270deg,#ff0000,#ffff00 16.7%,#00ff00 33.3%,#00ffff 50%,#0000ff 66.7%,#ff00ff 83.3%,#ff0000);-webkit-mask:radial-gradient(circle,transparent 61px,#000 62px);mask:radial-gradient(circle,transparent 61px,#000 62px)"></div>
<svg class="a" style="left:0;top:0;pointer-events:none" width="1920" height="1080">
 <defs>
  <linearGradient id="gr" x1="0" x2="1"><stop offset="0" stop-color="rgb(0,175,99)"/><stop offset="1" stop-color="rgb(255,175,99)"/></linearGradient>
  <linearGradient id="gg" x1="0" x2="1"><stop offset="0" stop-color="rgb(237,0,99)"/><stop offset="1" stop-color="rgb(237,255,99)"/></linearGradient>
  <linearGradient id="gb" x1="0" x2="1"><stop offset="0" stop-color="rgb(237,175,0)"/><stop offset="1" stop-color="rgb(237,175,255)"/></linearGradient>
  <linearGradient id="sqh" x1="0" x2="1"><stop offset="0" stop-color="#fff"/><stop offset="1" stop-color="#ff8a00"/></linearGradient>
  <linearGradient id="sqv" x1="0" x2="0" y1="0" y2="1"><stop offset="0" stop-color="#000" stop-opacity="0"/><stop offset="1" stop-color="#000"/></linearGradient>
  <clipPath id="ringclip"><path d="M1547.5 98 A73 73 0 1 1 1547.4 98Z M1547.5 110 A61 61 0 1 0 1547.6 110Z" clip-rule="evenodd"/></clipPath>
 </defs>
 <!-- panel headers -->
 <g fill="none" stroke="#d8d8d8" stroke-width="1.3">
  <circle cx="1466" cy="88" r="7.5"/><circle cx="1466" cy="277" r="7.5"/><circle cx="1466" cy="483" r="7.5"/>
  <path d="M1464 88 V85 Q1466.5 81.5 1469 85" /><path d="M1464 277 V274 Q1466.5 270.5 1469 274"/><path d="M1464 483 V480 Q1466.5 476.5 1469 480"/>
  <path d="M1618 87 H1626 V95 H1618Z M1621 87 V83 H1629 V91 H1626"/>
  <path d="M1618 276 H1626 V284 H1618Z M1621 276 V272 H1629 V280 H1626"/>
  <path d="M1618 482 H1626 V490 H1618Z M1621 482 V478 H1629 V486 H1626"/>
  <path d="M1641 83 L1651 93 M1651 83 L1641 93" stroke-width="1.6"/>
  <path d="M1641 272 L1651 282 M1651 272 L1641 282" stroke-width="1.6"/>
  <path d="M1641 478 L1651 488 M1651 478 L1641 488" stroke-width="1.6"/>
  <circle cx="1646" cy="105" r="5.5" stroke-width="1.6"/><path d="M1642 101 L1650 109" stroke-width="1.6"/>
  <rect x="1465" y="105" width="15" height="14"/><path d="M1465 108 H1480 M1468 110 V117 M1471 111 H1477 M1471 114 H1477 M1471 117 H1477"/>
  <path d="M1459 254 A6 6 0 0 1 1470 251 M1471 256 A6 6 0 0 1 1460 258" stroke-width="2"/>
 </g>
 <rect x="1462" y="88" width="9" height="5" fill="#d8d8d8"/><rect x="1462" y="277" width="9" height="5" fill="#d8d8d8"/><rect x="1462" y="483" width="9" height="5" fill="#d8d8d8"/>
 <g fill="#888"><rect x="1550" y="265" width="1.5" height="1.5"/><rect x="1553" y="265" width="1.5" height="1.5"/><rect x="1556" y="265" width="1.5" height="1.5"/><rect x="1559" y="265" width="1.5" height="1.5"/><rect x="1562" y="265" width="1.5" height="1.5"/>
 <rect x="1550" y="471" width="1.5" height="1.5"/><rect x="1553" y="471" width="1.5" height="1.5"/><rect x="1556" y="471" width="1.5" height="1.5"/><rect x="1559" y="471" width="1.5" height="1.5"/><rect x="1562" y="471" width="1.5" height="1.5"/></g>
 <!-- color wheel -->

 <rect x="1505" y="128" width="87" height="87" fill="url(#sqh)"/>
 <rect x="1505" y="128" width="87" height="87" fill="url(#sqv)"/>
 <circle cx="1555" cy="134" r="5" fill="none" stroke="#333" stroke-width="1.2"/>
 <path d="M1486 130 L1496 136" stroke="#3a2a10" stroke-width="1.5"/>
 <!-- history swatches -->
 <rect x="1639" y="113" width="16" height="16" fill="#edaf63"/>
 <rect x="1639" y="129" width="16" height="16" fill="#7c1010"/>
 <rect x="1639" y="145" width="16" height="32" fill="#5e0c16"/>
 <rect x="1639" y="177" width="16" height="16" fill="#2e0202"/>
 <rect x="1639" y="193" width="16" height="16" fill="#c42a2a"/>
 <rect x="1639" y="209" width="16" height="16" fill="#b66262"/>
 <!-- specific color selector -->
 <rect x="1462.5" y="291.5" width="157" height="21" rx="2" fill="#2b2b2b" stroke="#262626"/>
 <path d="M1607 301 L1613 301 L1610 305Z" fill="#ccc"/>
 <rect x="1488" y="320" width="108" height="18" fill="url(#gr)"/>
 <rect x="1488" y="351" width="108" height="18" fill="url(#gg)"/>
 <rect x="1488" y="382" width="108" height="18" fill="url(#gb)"/>
 <path d="M1583 343 L1589 343 L1586 340Z M1556 374 L1562 374 L1559 371Z M1526 405 L1532 405 L1529 402Z" fill="#ddd"/>
 <rect x="1602" y="320" width="47" height="22" rx="2" fill="#2a2a2a"/>
 <rect x="1602" y="351" width="47" height="22" rx="2" fill="#2a2a2a"/>
 <rect x="1602" y="382" width="47" height="22" rx="2" fill="#2a2a2a"/>
 <g fill="#ccc"><path d="M1639 329 L1647 329 L1643 325Z M1639 334 L1647 334 L1643 338Z"/><path d="M1639 360 L1647 360 L1643 356Z M1639 365 L1647 365 L1643 369Z"/><path d="M1639 391 L1647 391 L1643 387Z M1639 396 L1647 396 L1643 400Z"/></g>
 <rect x="1542" y="412" width="108" height="24" rx="2" fill="#262626"/>
 <rect x="1512" y="412" width="30" height="24" fill="#edaf63"/>
 <circle cx="1468" cy="453" r="6" fill="#242424"/><circle cx="1468" cy="453" r="2.5" fill="#bbb"/>
 <circle cx="1521" cy="453" r="6" fill="#242424"/>
 <!-- brush presets -->
 <rect x="1458.5" y="494.5" width="90" height="21" rx="2" fill="#2b2b2b" stroke="#262626"/>
 <path d="M1536 503 L1544 503 L1540 507Z" fill="#ccc"/>
 <rect x="1552.5" y="494.5" width="53" height="21" rx="2" fill="#2b2b2b" stroke="#262626"/>
 <path d="M1558 497 H1566 V512 L1562 508 L1558 512Z" fill="none" stroke="#ddd" stroke-width="1.5"/>
 <path d="M1598 510 L1602 510 L1600 512Z" fill="#ccc"/>
 <path d="M1613 499 H1625 M1613 504 H1625 M1613 509 H1625" stroke="#ddd" stroke-width="2"/>
 <rect x="1636" y="497" width="14" height="15" fill="none" stroke="#ddd" stroke-width="1.3"/><path d="M1643 497 V504" stroke="#ddd" stroke-width="1.5"/>
 <rect x="1457" y="517" width="182" height="466" fill="#141414"/>
<svg x="1459" y="519" width="58" height="58" viewBox="1459 519 58 58" overflow="hidden">
<rect x="1459" y="519" width="58" height="58" fill="#d2d2d2"/>
<path d="M1465 559 Q1469 549 1481 561 Q1493 571 1515 557" stroke="#6ad86a" stroke-width="9" fill="none" opacity="0.85" filter="url(#b2)"/>
<path d="M1467 559 Q1471 551 1481 561 Q1493 569 1515 559" stroke="#f0fff0" stroke-width="3" fill="none" opacity="0.7"/>
<path d="M1515 523 L1501 537" stroke="#3a8ad0" stroke-width="6" stroke-linecap="round"/>
<path d="M1501 537 L1494 544" stroke="#d8d8e0" stroke-width="5"/>
<path d="M1495 542 Q1483 547 1476 557 Q1487 555 1497 547Z" fill="#a87a50" stroke="#a87a50" stroke-width="2"/>
</svg>
<svg x="1519" y="519" width="58" height="58" viewBox="1519 519 58 58" overflow="hidden">
<rect x="1519" y="519" width="58" height="58" fill="#d2d2d2"/>
<path d="M1525 559 Q1529 549 1541 561 Q1553 571 1575 557" stroke="#8ae08a" stroke-width="9" fill="none" opacity="0.85" filter="url(#b2)"/>
<path d="M1527 559 Q1531 551 1541 561 Q1553 569 1575 559" stroke="#f0fff0" stroke-width="3" fill="none" opacity="0.7"/>
<path d="M1575 523 L1561 537" stroke="#3a8ad0" stroke-width="6" stroke-linecap="round"/>
<path d="M1561 537 L1554 544" stroke="#d8d8e0" stroke-width="5"/>
<path d="M1555 542 Q1543 547 1536 557 Q1547 555 1557 547Z" fill="#c88a50" stroke="#c88a50" stroke-width="2"/>
</svg>
<svg x="1579" y="519" width="58" height="58" viewBox="1579 519 58 58" overflow="hidden">
<rect x="1579" y="519" width="58" height="58" fill="#d2d2d2"/>
<path d="M1591 563 Q1609 573 1637 561" stroke="#808080" stroke-width="10" fill="none" opacity="0.6" filter="url(#b4)"/>
<path d="M1635 523 L1621 537" stroke="#d8a040" stroke-width="6" stroke-linecap="round"/>
<path d="M1621 537 L1614 544" stroke="#d8d8e0" stroke-width="5"/>
<path d="M1615 542 Q1603 547 1596 557 Q1607 555 1617 547Z" fill="#6a6a50" stroke="#6a6a50" stroke-width="2"/>
</svg>
<svg x="1459" y="579" width="58" height="58" viewBox="1459 579 58 58" overflow="hidden">
<rect x="1459" y="579" width="58" height="58" fill="#d2d2d2"/>
<path d="M1471 623 Q1489 633 1517 621" stroke="#9a9a9a" stroke-width="10" fill="none" opacity="0.6" filter="url(#b4)"/>
<path d="M1515 583 L1501 597" stroke="#d8a040" stroke-width="6" stroke-linecap="round"/>
<path d="M1501 597 L1494 604" stroke="#d8d8e0" stroke-width="5"/>
<path d="M1495 602 Q1483 607 1476 617 Q1487 615 1497 607Z" fill="#d8d8d8" stroke="#d8d8d8" stroke-width="2"/>
</svg>
<svg x="1519" y="579" width="58" height="58" viewBox="1519 579 58 58" overflow="hidden">
<rect x="1519" y="579" width="58" height="58" fill="#d2d2d2"/>
<path d="M1529 627 Q1531 615 1543 623 Q1559 633 1577 625" stroke="#555" stroke-width="7" fill="none" opacity="0.9" filter="url(#b2)"/>
<path d="M1575 583 L1561 597" stroke="#d8883a" stroke-width="6" stroke-linecap="round"/>
<path d="M1561 597 L1554 604" stroke="#d8d8e0" stroke-width="5"/>
<path d="M1555 602 Q1543 607 1536 617 Q1547 615 1557 607Z" fill="#555" stroke="#555" stroke-width="2"/>
</svg>
<svg x="1579" y="579" width="58" height="58" viewBox="1579 579 58 58" overflow="hidden">
<rect x="1579" y="579" width="58" height="58" fill="#d2d2d2"/>
<path d="M1589 627 Q1591 615 1603 623 Q1619 633 1637 625" stroke="#444" stroke-width="7" fill="none" opacity="0.9" filter="url(#b2)"/>
<path d="M1635 583 L1621 597" stroke="#d8a040" stroke-width="6" stroke-linecap="round"/>
<path d="M1621 597 L1614 604" stroke="#d8d8e0" stroke-width="5"/>
<path d="M1615 602 Q1603 607 1596 617 Q1607 615 1617 607Z" fill="#555" stroke="#555" stroke-width="2"/>
</svg>
<svg x="1459" y="640" width="58" height="58" viewBox="1459 640 58 58" overflow="hidden">
<rect x="1459" y="640" width="58" height="58" fill="#d2d2d2"/>
<path d="M1463 676 Q1471 668 1477 680 Q1489 690 1515 684 L1515 696 Q1479 698 1463 692Z" fill="#4a70e0" opacity="0.75" filter="url(#b2)"/>
<path d="M1515 644 L1501 658" stroke="#3a8ad0" stroke-width="6" stroke-linecap="round"/>
<path d="M1501 658 L1494 665" stroke="#d8d8e0" stroke-width="5"/>
<path d="M1495 663 Q1483 668 1476 678 Q1487 676 1497 668Z" fill="#8a5a20" stroke="#8a5a20" stroke-width="2"/>
</svg>
<svg x="1519" y="640" width="58" height="58" viewBox="1519 640 58 58" overflow="hidden">
<rect x="1519" y="640" width="58" height="58" fill="#d2d2d2"/>
<path d="M1523 676 Q1531 668 1537 680 Q1549 690 1575 684 L1575 696 Q1539 698 1523 692Z" fill="#9aa0e0" opacity="0.75" filter="url(#b2)"/>
<path d="M1575 644 L1561 658" stroke="#5aa040" stroke-width="6" stroke-linecap="round"/>
<path d="M1561 658 L1554 665" stroke="#d8d8e0" stroke-width="5"/>
<path d="M1555 663 Q1543 668 1536 678 Q1547 676 1557 668Z" fill="#8a6a50" stroke="#8a6a50" stroke-width="2"/>
</svg>
<svg x="1579" y="640" width="58" height="58" viewBox="1579 640 58 58" overflow="hidden">
<rect x="1579" y="640" width="58" height="58" fill="#d2d2d2"/>
<path d="M1591 684 Q1609 694 1637 682" stroke="#8a9ae8" stroke-width="10" fill="none" opacity="0.6" filter="url(#b4)"/>
<path d="M1637 642 L1627 652" stroke="#d8d8e0" stroke-width="7"/>
<path d="M1629 648 Q1609 652 1601 680 Q1624 676 1633 654Z" fill="#a08a68"/>
</svg>
<svg x="1459" y="700" width="58" height="58" viewBox="1459 700 58 58" overflow="hidden">
<rect x="1459" y="700" width="58" height="58" fill="#d2d2d2"/>
<path d="M1467 746 Q1473 734 1481 746 Q1495 754 1513 748" stroke="#5a7ae8" stroke-width="3" stroke-dasharray="2 2" fill="none" opacity="0.8"/>
<path d="M1515 704 L1501 718" stroke="#3a8ad0" stroke-width="6" stroke-linecap="round"/>
<path d="M1501 718 L1494 725" stroke="#d8d8e0" stroke-width="5"/>
<path d="M1495 723 Q1483 728 1476 738 Q1487 736 1497 728Z" fill="#8a5a20" stroke="#8a5a20" stroke-width="2"/>
</svg>
<svg x="1519" y="700" width="58" height="58" viewBox="1519 700 58 58" overflow="hidden">
<rect x="1519" y="700" width="58" height="58" fill="#d2d2d2"/>
<ellipse cx="1547" cy="740" rx="24" ry="14" fill="#6a88e8" opacity="0.7" filter="url(#b4)"/>
<path d="M1575 704 L1563 716" stroke="#3a8ad0" stroke-width="6" stroke-linecap="round"/>
<path d="M1563 716 L1555 724" stroke="#e0e0e8" stroke-width="8"/>
<path d="M1557 722 L1543 734 L1549 740 L1561 728Z" fill="#a87020"/>
</svg>
<svg x="1579" y="700" width="58" height="58" viewBox="1579 700 58 58" overflow="hidden">
<rect x="1579" y="700" width="58" height="58" fill="#d2d2d2"/>
<ellipse cx="1607" cy="740" rx="24" ry="14" fill="#5a70d8" opacity="0.7" filter="url(#b4)"/>
<path d="M1635 704 L1621 718" stroke="#a89070" stroke-width="6" stroke-linecap="round"/>
<path d="M1621 718 L1614 725" stroke="#d8d8e0" stroke-width="5"/>
<path d="M1615 723 Q1603 728 1596 738 Q1607 736 1617 728Z" fill="#222" stroke="#222" stroke-width="2"/>
</svg>
<svg x="1459" y="759" width="58" height="58" viewBox="1459 759 58 58" overflow="hidden">
<rect x="1459" y="759" width="58" height="58" fill="#d2d2d2"/>
<rect x="1462" y="791" width="54" height="22" fill="#6a7ae0" opacity="0.75" filter="url(#b2)"/>
<path d="M1515 763 L1503 775" stroke="#5a9a30" stroke-width="6" stroke-linecap="round"/>
<path d="M1503 775 L1495 783" stroke="#e0e0e8" stroke-width="8"/>
<path d="M1497 781 L1483 793 L1489 799 L1501 787Z" fill="#3a3030"/>
</svg>
<svg x="1519" y="759" width="58" height="58" viewBox="1519 759 58 58" overflow="hidden">
<rect x="1519" y="759" width="58" height="58" fill="#7a88aa"/>
<rect x="1520" y="760" width="56" height="56" fill="none" stroke="#3a4868" stroke-width="3"/>
<path d="M1525 801 Q1549 811 1575 799" stroke="#4a68d8" stroke-width="6" fill="none" opacity="0.7" filter="url(#b2)"/>
<path d="M1575 763 L1563 775" stroke="#3a70c0" stroke-width="6" stroke-linecap="round"/>
<path d="M1563 775 L1555 783" stroke="#e0e0e8" stroke-width="8"/>
<path d="M1557 781 L1543 793 L1549 799 L1561 787Z" fill="#7a5020"/>
</svg>
<svg x="1579" y="759" width="58" height="58" viewBox="1579 759 58 58" overflow="hidden">
<rect x="1579" y="759" width="58" height="58" fill="#d2d2d2"/>
<path d="M1583 795 Q1591 787 1597 799 Q1609 809 1635 803 L1635 815 Q1599 817 1583 811Z" fill="#6a80e0" opacity="0.75" filter="url(#b2)"/>
<path d="M1635 763 L1623 775" stroke="#3a9ad0" stroke-width="6" stroke-linecap="round"/>
<path d="M1623 775 L1615 783" stroke="#e0e0e8" stroke-width="8"/>
<path d="M1617 781 L1603 793 L1609 799 L1621 787Z" fill="#8a5a20"/>
</svg>
<svg x="1459" y="819" width="58" height="58" viewBox="1459 819 58 58" overflow="hidden">
<rect x="1459" y="819" width="58" height="58" fill="#d2d2d2"/>
<ellipse cx="1487" cy="859" rx="24" ry="14" fill="#8a9ae8" opacity="0.7" filter="url(#b4)"/>
<path d="M1515 823 L1501 837" stroke="#3a8ad0" stroke-width="6" stroke-linecap="round"/>
<path d="M1501 837 L1494 844" stroke="#d8d8e0" stroke-width="5"/>
<path d="M1495 842 Q1483 847 1476 857 Q1487 855 1497 847Z" fill="#8a5a20" stroke="#8a5a20" stroke-width="2"/>
</svg>
<svg x="1519" y="819" width="58" height="58" viewBox="1519 819 58 58" overflow="hidden">
<rect x="1519" y="819" width="58" height="58" fill="#d2d2d2"/>
<path d="M1523 855 Q1531 847 1537 859 Q1549 869 1575 863 L1575 875 Q1539 877 1523 871Z" fill="#7a8ae0" opacity="0.75" filter="url(#b2)"/>
<path d="M1575 823 L1549 849" stroke="#2a2a2a" stroke-width="10" stroke-linecap="round"/>
<path d="M1549 845 L1539 859 L1553 851Z" fill="#222"/>
</svg>
<svg x="1579" y="819" width="58" height="58" viewBox="1579 819 58 58" overflow="hidden">
<rect x="1579" y="819" width="58" height="58" fill="#d2d2d2"/>
<ellipse cx="1603" cy="859" rx="22" ry="16" fill="#6a80e0" opacity="0.35" filter="url(#b4)"/>
<rect x="1607" y="827" width="28" height="18" rx="5" fill="#e8b040" stroke="#6a4a10" stroke-width="1" transform="rotate(15 1621 836)"/>
</svg>
<svg x="1459" y="879" width="58" height="58" viewBox="1459 879 58 58" overflow="hidden">
<rect x="1459" y="879" width="58" height="58" fill="#d2d2d2"/>
<path d="M1469 927 Q1471 915 1483 923 Q1499 933 1517 925" stroke="#4a70e8" stroke-width="7" fill="none" opacity="0.9" filter="url(#b2)"/>
<path d="M1515 883 L1501 897" stroke="#3a9ad0" stroke-width="6" stroke-linecap="round"/>
<path d="M1501 897 L1494 904" stroke="#d8d8e0" stroke-width="5"/>
<path d="M1495 902 Q1483 907 1476 917 Q1487 915 1497 907Z" fill="#8a5a20" stroke="#8a5a20" stroke-width="2"/>
</svg>
<svg x="1519" y="879" width="58" height="58" viewBox="1519 879 58 58" overflow="hidden">
<rect x="1519" y="879" width="58" height="58" fill="#d2d2d2"/>
<path d="M1529 927 Q1531 915 1543 923 Q1559 933 1577 925" stroke="#5a6ae0" stroke-width="7" fill="none" opacity="0.9" filter="url(#b2)"/>
<path d="M1575 883 L1561 897" stroke="#5a9a30" stroke-width="6" stroke-linecap="round"/>
<path d="M1561 897 L1554 904" stroke="#d8d8e0" stroke-width="5"/>
<path d="M1555 902 Q1543 907 1536 917 Q1547 915 1557 907Z" fill="#333" stroke="#333" stroke-width="2"/>
</svg>
<svg x="1579" y="879" width="58" height="58" viewBox="1579 879 58 58" overflow="hidden">
<rect x="1579" y="879" width="58" height="58" fill="#d2d2d2"/>
<ellipse cx="1607" cy="919" rx="24" ry="14" fill="#6a80e0" opacity="0.7" filter="url(#b4)"/>
<path d="M1623 887 Q1631 889 1627 905 L1619 905 Q1615 889 1623 887Z" fill="#a87a58"/>
<ellipse cx="1623" cy="909" rx="12" ry="6" fill="#8a5a40"/>
</svg>
<svg x="1459" y="939" width="58" height="43" viewBox="1459 939 58 43" overflow="hidden">
<rect x="1459" y="939" width="58" height="43" fill="#d2d2d2"/>
<path d="M1465 981 Q1489 991 1515 979" stroke="#5a7ae0" stroke-width="6" fill="none" opacity="0.7" filter="url(#b2)"/>
<path d="M1515 943 L1501 957" stroke="#3a9ad0" stroke-width="6" stroke-linecap="round"/>
<path d="M1501 957 L1494 964" stroke="#d8d8e0" stroke-width="5"/>
<path d="M1495 962 Q1483 967 1476 977 Q1487 975 1497 967Z" fill="#8a5a20" stroke="#8a5a20" stroke-width="2"/>
</svg>
<svg x="1519" y="939" width="58" height="43" viewBox="1519 939 58 43" overflow="hidden">
<rect x="1519" y="939" width="58" height="43" fill="#d2d2d2"/>
<path d="M1525 981 Q1549 991 1575 979" stroke="#5a7ae0" stroke-width="6" fill="none" opacity="0.7" filter="url(#b2)"/>
<path d="M1575 943 L1561 957" stroke="#3a9ad0" stroke-width="6" stroke-linecap="round"/>
<path d="M1561 957 L1554 964" stroke="#d8d8e0" stroke-width="5"/>
<path d="M1555 962 Q1543 967 1536 977 Q1547 975 1557 967Z" fill="#8a5a20" stroke="#8a5a20" stroke-width="2"/>
</svg>
<svg x="1579" y="939" width="58" height="43" viewBox="1579 939 58 43" overflow="hidden">
<rect x="1579" y="939" width="58" height="43" fill="#d2d2d2"/>
<ellipse cx="1603" cy="979" rx="22" ry="16" fill="#7a8ae0" opacity="0.35" filter="url(#b4)"/>
<path d="M1623 947 Q1631 949 1627 965 L1619 965 Q1615 949 1623 947Z" fill="#a87a58"/>
<ellipse cx="1623" cy="969" rx="12" ry="6" fill="#8a5a40"/>
</svg>
 <rect x="1641" y="518" width="11" height="465" fill="#2b2b2b"/>
 <rect x="1641" y="518" width="11" height="15" fill="#333" stroke="#262626"/>
 <path d="M1643 528 L1650 528 L1646.5 524Z M1643 971 L1650 971 L1646.5 975Z" fill="#ccc"/>
 <rect x="1458" y="984" width="66" height="21" fill="#262626"/>
 <path d="M1534 994 L1537 998 L1543 988" stroke="#ccc" stroke-width="1.5" fill="none"/>
 <!-- canvas scrollbars -->
 <rect x="1437" y="112" width="12" height="15" fill="#333" stroke="#282828"/>
 <path d="M1439 122 L1447 122 L1443 117Z" fill="#ccc"/>
 <rect x="1438.5" y="373.5" width="10" height="322" fill="#2f2f2f" stroke="#4a4a4a"/>
 <rect x="1437" y="978" width="12" height="15" fill="#333" stroke="#282828"/>
 <path d="M1439 983 L1447 983 L1443 988Z" fill="#ccc"/>
 <rect x="62" y="995" width="14" height="13" fill="#333" stroke="#282828"/>
 <path d="M71 997 L71 1005 L66 1001Z" fill="#ccc"/>
 <rect x="540.5" y="996.5" width="470" height="10" fill="#2f2f2f" stroke="#4a4a4a"/>
 <rect x="1422" y="995" width="14" height="13" fill="#333" stroke="#282828"/>
 <path d="M1427 997 L1427 1005 L1432 1001Z" fill="#ccc"/>
</svg>
<div class="t" style="left:1480px;top:82px;font-size:11px;color:#d0d0d0">多功能拾色器</div>
<div class="t" style="left:1480px;top:271px;font-size:11px;color:#d0d0d0">显化拾色器</div>
<div class="t" style="left:1480px;top:477px;font-size:11px;color:#d0d0d0">笔刷预设</div>
<div class="t" style="left:1471px;top:296px;font-size:11px;color:#d0d0d0">RGB/透明度 (8 位整数/通道)</div>
<div class="t" style="left:1631px;top:293px;font-size:16px;color:#d8d8d8">%</div>
<div class="t" style="left:1461px;top:326px;font-size:11px;color:#d0d0d0">红：</div>
<div class="t" style="left:1461px;top:357px;font-size:11px;color:#d0d0d0">绿：</div>
<div class="t" style="left:1461px;top:388px;font-size:11px;color:#d0d0d0">蓝：</div>
<div class="t" style="left:1605px;top:326px;font-size:11px;color:#d0d0d0">237</div>
<div class="t" style="left:1605px;top:357px;font-size:11px;color:#d0d0d0">175</div>
<div class="t" style="left:1605px;top:388px;font-size:11px;color:#d0d0d0">99</div>
<div class="t" style="left:1461px;top:418px;font-size:11px;color:#d0d0d0">颜色名称：</div>
<div class="t" style="left:1604px;top:418px;font-size:11px;color:#d0d0d0">#edaf63</div>
<div class="t" style="left:1481px;top:447px;font-size:11px;color:#d0d0d0">RGB</div>
<div class="t" style="left:1534px;top:447px;font-size:11px;color:#d0d0d0">HSV</div>
<div class="t" style="left:1461px;top:499px;font-size:11px;color:#d0d0d0">水彩笔刷</div>
<div class="t" style="left:1571px;top:499px;font-size:11px;color:#d0d0d0">标签</div>
<div class="t" style="left:1460px;top:989px;font-size:11px;color:#b0b0b0">搜索</div>
<div class="t" style="left:1550px;top:989px;font-size:11px;color:#d0d0d0">仅在当前标签内搜索</div>

<!-- dock2 layers -->
<div class="a" style="left:1661px;top:78px;width:259px;height:930px;background:#313131"></div>
<div class="a" style="left:1664px;top:84px;width:65px;height:24px;background:#2e2e2e;border:1px solid #3e3e3e;border-bottom:none"></div>
<div class="a" style="left:1731px;top:82px;width:45px;height:26px;background:#353535;border:1px solid #444;border-bottom:none"></div>
<div class="a" style="left:1661px;top:107px;width:259px;height:1px;background:#404040"></div>
<div class="t" style="left:1673px;top:88px;font-size:12px;color:#d8d8d8">录像工具</div>
<div class="t" style="left:1741px;top:87px;font-size:12px;color:#d8d8d8">图层</div>
<div class="t" style="left:1685px;top:110px;font-size:11px;color:#d0d0d0">图层</div>
<div class="a" style="left:1664px;top:127px;width:220px;height:28px;background:#2d2d2d;border:1px solid #262626;border-radius:2px"></div>
<div class="t" style="left:1668px;top:135px;font-size:11px;color:#d0d0d0">正常</div>
<div class="a" style="left:1664px;top:160px;width:207px;height:28px;background:#475271"></div>
<div class="a" style="left:1871px;top:160px;width:13px;height:28px;background:#2a2a2a"></div>
<div class="t" style="left:1727px;top:168px;font-size:11px;color:#d8d8e0">不透明度: 100%</div>
<div class="a" style="left:1664px;top:191px;width:241px;height:790px;background:#252525;overflow:hidden"></div>
<svg class="a" style="left:0;top:0" width="1920" height="1080">
 <defs><clipPath id="lclip"><rect x="1664" y="191" width="241" height="790"/></clipPath></defs>
 <g fill="none" stroke="#d8d8d8" stroke-width="1.3">
  <circle cx="1671" cy="116" r="7"/>
  <path d="M1883 115 H1891 V123 H1883Z M1886 115 V111 H1894 V119 H1891"/>
  <path d="M1905 111 L1915 121 M1915 111 L1905 121" stroke-width="1.6"/>
  <path d="M1895 133 H1911 L1905 142 V151 L1901 149 V142Z" stroke-width="1.5"/>
  <path d="M1896 168 H1910 M1896 173 H1910 M1896 178 H1910" stroke-width="2"/>
 </g>
 <rect x="1667" y="116" width="9" height="5" fill="#d8d8d8"/><path d="M1669 116 V113 Q1671.5 109.5 1674 113" fill="none" stroke="#d8d8d8" stroke-width="1.3"/>
 <path d="M1871 139 L1879 139 L1875 143Z M1912 153 L1916 153 L1914 155Z M1912 184 L1916 184 L1914 186Z" fill="#ccc"/>
 <path d="M1874 172 L1881 172 L1877.5 168Z M1874 177 L1881 177 L1877.5 181Z" fill="#aaa"/>
 <g clip-path="url(#lclip)">
<ellipse cx="1675" cy="210" rx="7.5" ry="5.5" fill="#d8d8d8"/><ellipse cx="1675" cy="211" rx="6" ry="3.5" fill="#2a2a2a"/><circle cx="1675" cy="209" r="3" fill="#e8e8e8"/>
<rect x="1690" y="197" width="31" height="27" fill="#b4a0c0"/><rect x="1690" y="213.2" width="31" height="10.8" fill="#6aa8b8"/><rect x="1698" y="203" width="6" height="16" fill="#e0a8d8"/><rect x="1707" y="203" width="6" height="16" fill="#e0a8d8"/><rect x="1698" y="211" width="5" height="10" fill="#3a5088"/><rect x="1708" y="211" width="5" height="10" fill="#3a5088"/><rect x="1698" y="200" width="15" height="4" fill="#7a2a20"/>
<path d="M1727 193 H1732 L1734 195 H1739 V204 H1727Z M1727 196 H1739" fill="none" stroke="#dcdcdc" stroke-width="1.3" opacity="1"/>
<path d="M1728 219 L1733 224 L1738 219" fill="none" stroke="#e0e0e0" stroke-width="1.6"/>
<path d="M1850 215 V208 H1861 V215Z" fill="#6a6a6a"/><path d="M1853 208 V204 Q1858 200 1861 205" fill="none" stroke="#6a6a6a" stroke-width="1.5"/>
<text x="1867" y="216" font-family="Liberation Serif" font-style="italic" font-size="17" fill="#6a6a6a">α</text>
<g fill="#6a6a6a"><rect x="1886" y="205" width="7" height="3"/><rect x="1894" y="205" width="7" height="3"/><rect x="1886" y="209" width="4" height="3"/><rect x="1891" y="209" width="6" height="3"/><rect x="1898" y="209" width="3" height="3"/><rect x="1886" y="213" width="7" height="3"/><rect x="1894" y="213" width="7" height="3"/></g>
<ellipse cx="1675" cy="248" rx="7" ry="5" fill="none" stroke="#555" stroke-width="1.5"/>
<rect x="1689" y="242" width="1" height="12" fill="#444"/>
<rect x="1698" y="242" width="31" height="10" fill="#7a7a7a" opacity="0.7"/>
<path d="M1735 233 L1739 239 M1735 233 H1746 V242 H1740" fill="none" stroke="#dcdcdc" stroke-width="1.3" opacity="0.45"/>
<path d="M1850 253 V246 H1861 V253Z" fill="#6a6a6a"/><path d="M1853 246 V242 Q1858 238 1861 243" fill="none" stroke="#6a6a6a" stroke-width="1.5"/>
<text x="1867" y="254" font-family="Liberation Serif" font-style="italic" font-size="17" fill="#6a6a6a">α</text>
<g><rect x="1886" y="241" width="15" height="15" fill="#555"/><rect x="1886" y="241" width="5" height="5" fill="#777"/><rect x="1896" y="241" width="5" height="5" fill="#777"/><rect x="1891" y="246" width="5" height="5" fill="#777"/><rect x="1886" y="251" width="5" height="5" fill="#777"/><rect x="1896" y="251" width="5" height="5" fill="#777"/></g>
<ellipse cx="1675" cy="286" rx="7" ry="5" fill="none" stroke="#555" stroke-width="1.5"/>
<rect x="1689" y="280" width="1" height="12" fill="#444"/>
<rect x="1698" y="281" width="31" height="11" fill="#7a7a7a" opacity="0.7"/>
<path d="M1735 269 H1740 L1742 271 H1747 V280 H1735Z M1735 272 H1747" fill="none" stroke="#dcdcdc" stroke-width="1.3" opacity="0.45"/>
<path d="M1738 292 L1743 297 L1738 302" fill="none" stroke="#e0e0e0" stroke-width="1.6" opacity="0.45"/>
<path d="M1850 291 V284 H1861 V291Z" fill="#6a6a6a"/><path d="M1853 284 V280 Q1858 276 1861 281" fill="none" stroke="#6a6a6a" stroke-width="1.5"/>
<text x="1867" y="292" font-family="Liberation Serif" font-style="italic" font-size="17" fill="#6a6a6a">α</text>
<g fill="#6a6a6a"><rect x="1886" y="281" width="7" height="3"/><rect x="1894" y="281" width="7" height="3"/><rect x="1886" y="285" width="4" height="3"/><rect x="1891" y="285" width="6" height="3"/><rect x="1898" y="285" width="3" height="3"/><rect x="1886" y="289" width="7" height="3"/><rect x="1894" y="289" width="7" height="3"/></g>
<ellipse cx="1675" cy="324" rx="7.5" ry="5.5" fill="#d8d8d8"/><ellipse cx="1675" cy="325" rx="6" ry="3.5" fill="#2a2a2a"/><circle cx="1675" cy="323" r="3" fill="#e8e8e8"/>
<rect x="1689" y="318" width="1" height="12" fill="#444"/>
<rect x="1698" y="311" width="31" height="27" fill="#b4a0c0"/><rect x="1698" y="327.2" width="31" height="10.8" fill="#6aa8b8"/><rect x="1706" y="317" width="6" height="16" fill="#e0a8d8"/><rect x="1715" y="317" width="6" height="16" fill="#e0a8d8"/><rect x="1706" y="325" width="5" height="10" fill="#3a5088"/><rect x="1716" y="325" width="5" height="10" fill="#3a5088"/><rect x="1706" y="314" width="15" height="4" fill="#7a2a20"/>
<path d="M1735 307 H1740 L1742 309 H1747 V318 H1735Z M1735 310 H1747" fill="none" stroke="#dcdcdc" stroke-width="1.3" opacity="1"/>
<path d="M1736 333 L1741 338 L1746 333" fill="none" stroke="#e0e0e0" stroke-width="1.6"/>
<path d="M1850 329 V322 H1861 V329Z" fill="#6a6a6a"/><path d="M1853 322 V318 Q1858 314 1861 319" fill="none" stroke="#6a6a6a" stroke-width="1.5"/>
<text x="1867" y="330" font-family="Liberation Serif" font-style="italic" font-size="17" fill="#6a6a6a">α</text>
<g fill="#6a6a6a"><rect x="1886" y="319" width="7" height="3"/><rect x="1894" y="319" width="7" height="3"/><rect x="1886" y="323" width="4" height="3"/><rect x="1891" y="323" width="6" height="3"/><rect x="1898" y="323" width="3" height="3"/><rect x="1886" y="327" width="7" height="3"/><rect x="1894" y="327" width="7" height="3"/></g>
<ellipse cx="1675" cy="362" rx="7" ry="5" fill="none" stroke="#555" stroke-width="1.5"/>
<rect x="1689" y="356" width="1" height="12" fill="#444"/>
<rect x="1693" y="356" width="1" height="12" fill="#444"/>
<rect x="1707" y="348" width="27" height="29" fill="#6a6a6a" opacity="0.8"/>
<path d="M1743 347 L1747 353 M1743 347 H1754 V356 H1748" fill="none" stroke="#dcdcdc" stroke-width="1.3" opacity="0.45"/>
<path d="M1850 367 V360 H1861 V367Z" fill="#6a6a6a"/><path d="M1853 360 V356 Q1858 352 1861 357" fill="none" stroke="#6a6a6a" stroke-width="1.5"/>
<text x="1867" y="368" font-family="Liberation Serif" font-style="italic" font-size="17" fill="#6a6a6a">α</text>
<g><rect x="1886" y="355" width="15" height="15" fill="#555"/><rect x="1886" y="355" width="5" height="5" fill="#777"/><rect x="1896" y="355" width="5" height="5" fill="#777"/><rect x="1891" y="360" width="5" height="5" fill="#777"/><rect x="1886" y="365" width="5" height="5" fill="#777"/><rect x="1896" y="365" width="5" height="5" fill="#777"/></g>
<ellipse cx="1675" cy="400" rx="7" ry="5" fill="none" stroke="#555" stroke-width="1.5"/>
<rect x="1689" y="394" width="1" height="12" fill="#444"/>
<rect x="1693" y="394" width="1" height="12" fill="#444"/>
<rect x="1697" y="394" width="1" height="12" fill="#444"/>
<rect x="1711" y="385" width="20" height="30" fill="#6a6a6a" opacity="0.8"/>
<path d="M1743 385 L1747 391 M1743 385 H1754 V394 H1748" fill="none" stroke="#dcdcdc" stroke-width="1.3" opacity="0.45"/>
<path d="M1850 405 V398 H1861 V405Z" fill="#6a6a6a"/><path d="M1853 398 V394 Q1858 390 1861 395" fill="none" stroke="#6a6a6a" stroke-width="1.5"/>
<text x="1867" y="406" font-family="Liberation Serif" font-style="italic" font-size="17" fill="#6a6a6a">α</text>
<g><rect x="1886" y="393" width="15" height="15" fill="#555"/><rect x="1886" y="393" width="5" height="5" fill="#777"/><rect x="1896" y="393" width="5" height="5" fill="#777"/><rect x="1891" y="398" width="5" height="5" fill="#777"/><rect x="1886" y="403" width="5" height="5" fill="#777"/><rect x="1896" y="403" width="5" height="5" fill="#777"/></g>
<ellipse cx="1675" cy="438" rx="7.5" ry="5.5" fill="#d8d8d8"/><ellipse cx="1675" cy="439" rx="6" ry="3.5" fill="#2a2a2a"/><circle cx="1675" cy="437" r="3" fill="#e8e8e8"/>
<rect x="1689" y="432" width="1" height="12" fill="#444"/>
<rect x="1693" y="432" width="1" height="12" fill="#444"/>
<rect x="1706" y="438" width="31" height="2" fill="#e0e0e0"/>
<path d="M1743 423 L1747 429 M1743 423 H1754 V432 H1748" fill="none" stroke="#dcdcdc" stroke-width="1.3" opacity="1"/>
<path d="M1850 443 V436 H1861 V443Z" fill="#6a6a6a"/><path d="M1853 436 V432 Q1858 428 1861 433" fill="none" stroke="#6a6a6a" stroke-width="1.5"/>
<text x="1867" y="444" font-family="Liberation Serif" font-style="italic" font-size="17" fill="#6a6a6a">α</text>
<g><rect x="1886" y="431" width="15" height="15" fill="#555"/><rect x="1886" y="431" width="5" height="5" fill="#777"/><rect x="1896" y="431" width="5" height="5" fill="#777"/><rect x="1891" y="436" width="5" height="5" fill="#777"/><rect x="1886" y="441" width="5" height="5" fill="#777"/><rect x="1896" y="441" width="5" height="5" fill="#777"/></g>
<ellipse cx="1675" cy="476" rx="7.5" ry="5.5" fill="#d8d8d8"/><ellipse cx="1675" cy="477" rx="6" ry="3.5" fill="#2a2a2a"/><circle cx="1675" cy="475" r="3" fill="#e8e8e8"/>
<rect x="1689" y="470" width="1" height="12" fill="#444"/>
<rect x="1693" y="470" width="1" height="12" fill="#444"/>
<rect x="1706" y="463" width="31" height="27" fill="#b4a0c0"/><rect x="1706" y="479.2" width="31" height="10.8" fill="#6aa8b8"/><rect x="1714" y="469" width="6" height="16" fill="#e0a8d8"/><rect x="1723" y="469" width="6" height="16" fill="#e0a8d8"/><rect x="1714" y="477" width="5" height="10" fill="#3a5088"/><rect x="1724" y="477" width="5" height="10" fill="#3a5088"/><rect x="1714" y="466" width="15" height="4" fill="#7a2a20"/>
<path d="M1743 459 H1748 L1750 461 H1755 V470 H1743Z M1743 462 H1755" fill="none" stroke="#dcdcdc" stroke-width="1.3" opacity="1"/>
<path d="M1744 485 L1749 490 L1754 485" fill="none" stroke="#e0e0e0" stroke-width="1.6"/>
<path d="M1850 481 V474 H1861 V481Z" fill="#6a6a6a"/><path d="M1853 474 V470 Q1858 466 1861 471" fill="none" stroke="#6a6a6a" stroke-width="1.5"/>
<text x="1867" y="482" font-family="Liberation Serif" font-style="italic" font-size="17" fill="#6a6a6a">α</text>
<g fill="#6a6a6a"><rect x="1886" y="471" width="7" height="3"/><rect x="1894" y="471" width="7" height="3"/><rect x="1886" y="475" width="4" height="3"/><rect x="1891" y="475" width="6" height="3"/><rect x="1898" y="475" width="3" height="3"/><rect x="1886" y="479" width="7" height="3"/><rect x="1894" y="479" width="7" height="3"/></g>
<ellipse cx="1675" cy="514" rx="7.5" ry="5.5" fill="#d8d8d8"/><ellipse cx="1675" cy="515" rx="6" ry="3.5" fill="#2a2a2a"/><circle cx="1675" cy="513" r="3" fill="#e8e8e8"/>
<rect x="1689" y="508" width="1" height="12" fill="#444"/>
<rect x="1693" y="508" width="1" height="12" fill="#444"/>
<rect x="1697" y="508" width="1" height="12" fill="#444"/>
<rect x="1714" y="506" width="31" height="15" fill="#e8ecf0"/><rect x="1718" y="509" width="8" height="8" fill="#c8d0dc"/><rect x="1732" y="509" width="8" height="8" fill="#c8d0dc"/>
<path d="M1751 499 L1755 505 M1751 499 H1762 V508 H1756" fill="none" stroke="#dcdcdc" stroke-width="1.3" opacity="1"/>
<path d="M1850 519 V512 H1861 V519Z" fill="#6a6a6a"/><path d="M1853 512 V508 Q1858 504 1861 509" fill="none" stroke="#6a6a6a" stroke-width="1.5"/>
<text x="1867" y="520" font-family="Liberation Serif" font-style="italic" font-size="17" fill="#6a6a6a">α</text>
<g><rect x="1886" y="507" width="15" height="15" fill="#555"/><rect x="1886" y="507" width="5" height="5" fill="#777"/><rect x="1896" y="507" width="5" height="5" fill="#777"/><rect x="1891" y="512" width="5" height="5" fill="#777"/><rect x="1886" y="517" width="5" height="5" fill="#777"/><rect x="1896" y="517" width="5" height="5" fill="#777"/></g>
<ellipse cx="1675" cy="552" rx="7.5" ry="5.5" fill="#d8d8d8"/><ellipse cx="1675" cy="553" rx="6" ry="3.5" fill="#2a2a2a"/><circle cx="1675" cy="551" r="3" fill="#e8e8e8"/>
<rect x="1689" y="546" width="1" height="12" fill="#444"/>
<rect x="1693" y="546" width="1" height="12" fill="#444"/>
<rect x="1697" y="546" width="1" height="12" fill="#444"/>
<rect x="1701" y="546" width="1" height="12" fill="#444"/>
<rect x="1721" y="537" width="17" height="30" fill="#f0f0f0"/><rect x="1723" y="543" width="5" height="12" fill="#e0a0d0"/><rect x="1731" y="543" width="5" height="12" fill="#e0a0d0"/><rect x="1723" y="554" width="4" height="12" fill="#2a3a70"/><rect x="1732" y="554" width="4" height="12" fill="#2a3a70"/><rect x="1723" y="538" width="13" height="5" fill="#7a4030"/>
<path d="M1751 535 H1756 L1758 537 H1763 V546 H1751Z M1751 538 H1763" fill="none" stroke="#dcdcdc" stroke-width="1.3" opacity="1"/>
<path d="M1752 561 L1757 566 L1762 561" fill="none" stroke="#e0e0e0" stroke-width="1.6"/>
<path d="M1850 557 V550 H1861 V557Z" fill="#6a6a6a"/><path d="M1853 550 V546 Q1858 542 1861 547" fill="none" stroke="#6a6a6a" stroke-width="1.5"/>
<text x="1867" y="558" font-family="Liberation Serif" font-style="italic" font-size="17" fill="#6a6a6a">α</text>
<g fill="#6a6a6a"><rect x="1886" y="547" width="7" height="3"/><rect x="1894" y="547" width="7" height="3"/><rect x="1886" y="551" width="4" height="3"/><rect x="1891" y="551" width="6" height="3"/><rect x="1898" y="551" width="3" height="3"/><rect x="1886" y="555" width="7" height="3"/><rect x="1894" y="555" width="7" height="3"/></g>
<ellipse cx="1675" cy="590" rx="7.5" ry="5.5" fill="#d8d8d8"/><ellipse cx="1675" cy="591" rx="6" ry="3.5" fill="#2a2a2a"/><circle cx="1675" cy="589" r="3" fill="#e8e8e8"/>
<rect x="1689" y="584" width="1" height="12" fill="#444"/>
<rect x="1693" y="584" width="1" height="12" fill="#444"/>
<rect x="1697" y="584" width="1" height="12" fill="#444"/>
<rect x="1701" y="584" width="1" height="12" fill="#444"/>
<rect x="1722" y="584" width="31" height="12" fill="#f4f0f0"/><circle cx="1729" cy="590" r="5" fill="#8a4a30"/><circle cx="1746" cy="590" r="5" fill="#8a4a30"/>
<path d="M1759 573 H1764 L1766 575 H1771 V584 H1759Z M1759 576 H1771" fill="none" stroke="#dcdcdc" stroke-width="1.3" opacity="1"/>
<path d="M1762 596 L1767 601 L1762 606" fill="none" stroke="#e0e0e0" stroke-width="1.6" opacity="1"/>
<path d="M1850 595 V588 H1861 V595Z" fill="#6a6a6a"/><path d="M1853 588 V584 Q1858 580 1861 585" fill="none" stroke="#6a6a6a" stroke-width="1.5"/>
<text x="1867" y="596" font-family="Liberation Serif" font-style="italic" font-size="17" fill="#6a6a6a">α</text>
<g fill="#6a6a6a"><rect x="1886" y="585" width="7" height="3"/><rect x="1894" y="585" width="7" height="3"/><rect x="1886" y="589" width="4" height="3"/><rect x="1891" y="589" width="6" height="3"/><rect x="1898" y="589" width="3" height="3"/><rect x="1886" y="593" width="7" height="3"/><rect x="1894" y="593" width="7" height="3"/></g>
<ellipse cx="1675" cy="628" rx="7.5" ry="5.5" fill="#d8d8d8"/><ellipse cx="1675" cy="629" rx="6" ry="3.5" fill="#2a2a2a"/><circle cx="1675" cy="627" r="3" fill="#e8e8e8"/>
<rect x="1689" y="622" width="1" height="12" fill="#444"/>
<rect x="1693" y="622" width="1" height="12" fill="#444"/>
<rect x="1697" y="622" width="1" height="12" fill="#444"/>
<rect x="1701" y="622" width="1" height="12" fill="#444"/>
<rect x="1722" y="620" width="31" height="17" fill="#f4eef4"/><rect x="1724" y="622" width="10" height="13" fill="#e0a0d8"/><rect x="1741" y="622" width="10" height="13" fill="#e0a0d8"/>
<path d="M1759 611 H1764 L1766 613 H1771 V622 H1759Z M1759 614 H1771" fill="none" stroke="#dcdcdc" stroke-width="1.3" opacity="1"/>
<path d="M1762 634 L1767 639 L1762 644" fill="none" stroke="#e0e0e0" stroke-width="1.6" opacity="1"/>
<path d="M1850 633 V626 H1861 V633Z" fill="#6a6a6a"/><path d="M1853 626 V622 Q1858 618 1861 623" fill="none" stroke="#6a6a6a" stroke-width="1.5"/>
<text x="1867" y="634" font-family="Liberation Serif" font-style="italic" font-size="17" fill="#6a6a6a">α</text>
<g fill="#6a6a6a"><rect x="1886" y="623" width="7" height="3"/><rect x="1894" y="623" width="7" height="3"/><rect x="1886" y="627" width="4" height="3"/><rect x="1891" y="627" width="6" height="3"/><rect x="1898" y="627" width="3" height="3"/><rect x="1886" y="631" width="7" height="3"/><rect x="1894" y="631" width="7" height="3"/></g>
<ellipse cx="1675" cy="666" rx="7.5" ry="5.5" fill="#d8d8d8"/><ellipse cx="1675" cy="667" rx="6" ry="3.5" fill="#2a2a2a"/><circle cx="1675" cy="665" r="3" fill="#e8e8e8"/>
<rect x="1689" y="660" width="1" height="12" fill="#444"/>
<rect x="1693" y="660" width="1" height="12" fill="#444"/>
<rect x="1697" y="660" width="1" height="12" fill="#444"/>
<rect x="1701" y="660" width="1" height="12" fill="#444"/>
<rect x="1722" y="651" width="31" height="31" fill="#f2f2f2"/>
<rect x="1723" y="652" width="5" height="5" fill="#dcdcdc"/>
<rect x="1739" y="652" width="5" height="5" fill="#dcdcdc"/>
<rect x="1731" y="660" width="5" height="5" fill="#dcdcdc"/>
<rect x="1747" y="660" width="5" height="5" fill="#dcdcdc"/>
<rect x="1723" y="668" width="5" height="5" fill="#dcdcdc"/>
<rect x="1739" y="668" width="5" height="5" fill="#dcdcdc"/>
<rect x="1731" y="676" width="5" height="5" fill="#dcdcdc"/>
<rect x="1747" y="676" width="5" height="5" fill="#dcdcdc"/>
<path d="M1759 651 L1763 657 M1759 651 H1770 V660 H1764" fill="none" stroke="#dcdcdc" stroke-width="1.3" opacity="1"/>
<path d="M1850 671 V664 H1861 V671Z" fill="#6a6a6a"/><path d="M1853 664 V660 Q1858 656 1861 661" fill="none" stroke="#6a6a6a" stroke-width="1.5"/>
<text x="1867" y="672" font-family="Liberation Serif" font-style="italic" font-size="17" fill="#e8e8e8">α</text>
<path d="M1866 666 H1882" stroke="#e8e8e8" stroke-width="1.5"/>
<g><rect x="1886" y="659" width="15" height="15" fill="#555"/><rect x="1886" y="659" width="5" height="5" fill="#777"/><rect x="1896" y="659" width="5" height="5" fill="#777"/><rect x="1891" y="664" width="5" height="5" fill="#777"/><rect x="1886" y="669" width="5" height="5" fill="#777"/><rect x="1896" y="669" width="5" height="5" fill="#777"/></g>
<ellipse cx="1675" cy="704" rx="7.5" ry="5.5" fill="#d8d8d8"/><ellipse cx="1675" cy="705" rx="6" ry="3.5" fill="#2a2a2a"/><circle cx="1675" cy="703" r="3" fill="#e8e8e8"/>
<rect x="1689" y="698" width="1" height="12" fill="#444"/>
<rect x="1693" y="698" width="1" height="12" fill="#444"/>
<rect x="1697" y="698" width="1" height="12" fill="#444"/>
<rect x="1701" y="698" width="1" height="12" fill="#444"/>
<rect x="1705" y="698" width="1" height="12" fill="#444"/>
<rect x="1726" y="689" width="23" height="30" fill="#f2f2f2"/>
<rect x="1727" y="690" width="5" height="5" fill="#dcdcdc"/>
<rect x="1743" y="690" width="5" height="5" fill="#dcdcdc"/>
<rect x="1735" y="698" width="5" height="5" fill="#dcdcdc"/>
<rect x="1727" y="706" width="5" height="5" fill="#dcdcdc"/>
<rect x="1743" y="706" width="5" height="5" fill="#dcdcdc"/>
<rect x="1735" y="714" width="5" height="5" fill="#dcdcdc"/>
<path d="M1732 693 L1735 711 M1743 693 L1740 711" stroke="#8a1a1a" stroke-width="3"/><path d="M1730 717 L1737.5 701 L1745 717" stroke="#e8a890" stroke-width="3" fill="none"/>
<path d="M1759 687 H1764 L1766 689 H1771 V698 H1759Z M1759 690 H1771" fill="none" stroke="#dcdcdc" stroke-width="1.3" opacity="1"/>
<path d="M1760 713 L1765 718 L1770 713" fill="none" stroke="#e0e0e0" stroke-width="1.6"/>
<path d="M1850 709 V702 H1861 V709Z" fill="#6a6a6a"/><path d="M1853 702 V698 Q1858 694 1861 699" fill="none" stroke="#6a6a6a" stroke-width="1.5"/>
<text x="1867" y="710" font-family="Liberation Serif" font-style="italic" font-size="17" fill="#6a6a6a">α</text>
<g fill="#6a6a6a"><rect x="1886" y="699" width="7" height="3"/><rect x="1894" y="699" width="7" height="3"/><rect x="1886" y="703" width="4" height="3"/><rect x="1891" y="703" width="6" height="3"/><rect x="1898" y="703" width="3" height="3"/><rect x="1886" y="707" width="7" height="3"/><rect x="1894" y="707" width="7" height="3"/></g>
<rect x="1686" y="724" width="219" height="37" fill="#434b63"/>
<ellipse cx="1675" cy="742" rx="7.5" ry="5.5" fill="#d8d8d8"/><ellipse cx="1675" cy="743" rx="6" ry="3.5" fill="#2a2a2a"/><circle cx="1675" cy="741" r="3" fill="#e8e8e8"/>
<rect x="1689" y="736" width="1" height="12" fill="#444"/>
<rect x="1693" y="736" width="1" height="12" fill="#444"/>
<rect x="1697" y="736" width="1" height="12" fill="#444"/>
<rect x="1701" y="736" width="1" height="12" fill="#444"/>
<rect x="1705" y="736" width="1" height="12" fill="#444"/>
<rect x="1733" y="727" width="24" height="31" fill="#f2f2f2"/>
<rect x="1734" y="728" width="5" height="5" fill="#dcdcdc"/>
<rect x="1750" y="728" width="5" height="5" fill="#dcdcdc"/>
<rect x="1742" y="736" width="5" height="5" fill="#dcdcdc"/>
<rect x="1734" y="744" width="5" height="5" fill="#dcdcdc"/>
<rect x="1750" y="744" width="5" height="5" fill="#dcdcdc"/>
<rect x="1742" y="752" width="5" height="5" fill="#dcdcdc"/>
<path d="M1739 731 L1742 749 M1751 731 L1748 749" stroke="#8a1a1a" stroke-width="3"/><path d="M1737 755 L1745.0 739 L1753 755" stroke="#e8a890" stroke-width="3" fill="none"/>
<path d="M1767 725 H1772 L1774 727 H1779 V736 H1767Z M1767 728 H1779" fill="none" stroke="#dcdcdc" stroke-width="1.3" opacity="1"/>
<path d="M1770 748 L1775 753 L1770 758" fill="none" stroke="#e0e0e0" stroke-width="1.6" opacity="1"/>
<path d="M1850 747 V740 H1861 V747Z" fill="#6a6a6a"/><path d="M1853 740 V736 Q1858 732 1861 737" fill="none" stroke="#6a6a6a" stroke-width="1.5"/>
<text x="1867" y="748" font-family="Liberation Serif" font-style="italic" font-size="17" fill="#6a6a6a">α</text>
<g fill="#6a6a6a"><rect x="1886" y="737" width="7" height="3"/><rect x="1894" y="737" width="7" height="3"/><rect x="1886" y="741" width="4" height="3"/><rect x="1891" y="741" width="6" height="3"/><rect x="1898" y="741" width="3" height="3"/><rect x="1886" y="745" width="7" height="3"/><rect x="1894" y="745" width="7" height="3"/></g>
<ellipse cx="1675" cy="780" rx="7.5" ry="5.5" fill="#d8d8d8"/><ellipse cx="1675" cy="781" rx="6" ry="3.5" fill="#2a2a2a"/><circle cx="1675" cy="779" r="3" fill="#e8e8e8"/>
<rect x="1689" y="774" width="1" height="12" fill="#444"/>
<rect x="1693" y="774" width="1" height="12" fill="#444"/>
<rect x="1697" y="774" width="1" height="12" fill="#444"/>
<rect x="1701" y="774" width="1" height="12" fill="#444"/>
<rect x="1705" y="774" width="1" height="12" fill="#444"/>
<rect x="1709" y="774" width="1" height="12" fill="#444"/>
<rect x="1734" y="765" width="22" height="31" fill="#f2f2f2"/>
<rect x="1735" y="766" width="5" height="5" fill="#dcdcdc"/>
<rect x="1751" y="766" width="5" height="5" fill="#dcdcdc"/>
<rect x="1743" y="774" width="5" height="5" fill="#dcdcdc"/>
<rect x="1735" y="782" width="5" height="5" fill="#dcdcdc"/>
<rect x="1751" y="782" width="5" height="5" fill="#dcdcdc"/>
<rect x="1743" y="790" width="5" height="5" fill="#dcdcdc"/>
<path d="M1740 769 L1743 787 M1750 769 L1747 787" stroke="#8a1a1a" stroke-width="3"/><path d="M1738 793 L1745.0 777 L1752 793" stroke="#e8a890" stroke-width="3" fill="none"/>
<path d="M1767 763 H1772 L1774 765 H1779 V774 H1767Z M1767 766 H1779" fill="none" stroke="#dcdcdc" stroke-width="1.3" opacity="1"/>
<path d="M1770 786 L1775 791 L1770 796" fill="none" stroke="#e0e0e0" stroke-width="1.6" opacity="1"/>
<path d="M1850 785 V778 H1861 V785Z" fill="#6a6a6a"/><path d="M1853 778 V774 Q1858 770 1861 775" fill="none" stroke="#6a6a6a" stroke-width="1.5"/>
<text x="1867" y="786" font-family="Liberation Serif" font-style="italic" font-size="17" fill="#6a6a6a">α</text>
<g fill="#6a6a6a"><rect x="1886" y="775" width="7" height="3"/><rect x="1894" y="775" width="7" height="3"/><rect x="1886" y="779" width="4" height="3"/><rect x="1891" y="779" width="6" height="3"/><rect x="1898" y="779" width="3" height="3"/><rect x="1886" y="783" width="7" height="3"/><rect x="1894" y="783" width="7" height="3"/></g>
<ellipse cx="1675" cy="818" rx="7.5" ry="5.5" fill="#d8d8d8"/><ellipse cx="1675" cy="819" rx="6" ry="3.5" fill="#2a2a2a"/><circle cx="1675" cy="817" r="3" fill="#e8e8e8"/>
<rect x="1689" y="812" width="1" height="12" fill="#444"/>
<rect x="1693" y="812" width="1" height="12" fill="#444"/>
<rect x="1697" y="812" width="1" height="12" fill="#444"/>
<rect x="1701" y="812" width="1" height="12" fill="#444"/>
<rect x="1705" y="812" width="1" height="12" fill="#444"/>
<rect x="1709" y="812" width="1" height="12" fill="#444"/>
<rect x="1734" y="803" width="23" height="31" fill="#f2f2f2"/>
<rect x="1735" y="804" width="5" height="5" fill="#dcdcdc"/>
<rect x="1751" y="804" width="5" height="5" fill="#dcdcdc"/>
<rect x="1743" y="812" width="5" height="5" fill="#dcdcdc"/>
<rect x="1735" y="820" width="5" height="5" fill="#dcdcdc"/>
<rect x="1751" y="820" width="5" height="5" fill="#dcdcdc"/>
<rect x="1743" y="828" width="5" height="5" fill="#dcdcdc"/>
<path d="M1739 808 L1753 830" stroke="#e0a088" stroke-width="5"/>
<path d="M1767 801 H1772 L1774 803 H1779 V812 H1767Z M1767 804 H1779" fill="none" stroke="#dcdcdc" stroke-width="1.3" opacity="1"/>
<path d="M1770 824 L1775 829 L1770 834" fill="none" stroke="#e0e0e0" stroke-width="1.6" opacity="1"/>
<path d="M1850 823 V816 H1861 V823Z" fill="#6a6a6a"/><path d="M1853 816 V812 Q1858 808 1861 813" fill="none" stroke="#6a6a6a" stroke-width="1.5"/>
<text x="1867" y="824" font-family="Liberation Serif" font-style="italic" font-size="17" fill="#6a6a6a">α</text>
<g fill="#6a6a6a"><rect x="1886" y="813" width="7" height="3"/><rect x="1894" y="813" width="7" height="3"/><rect x="1886" y="817" width="4" height="3"/><rect x="1891" y="817" width="6" height="3"/><rect x="1898" y="817" width="3" height="3"/><rect x="1886" y="821" width="7" height="3"/><rect x="1894" y="821" width="7" height="3"/></g>
<ellipse cx="1675" cy="856" rx="7.5" ry="5.5" fill="#d8d8d8"/><ellipse cx="1675" cy="857" rx="6" ry="3.5" fill="#2a2a2a"/><circle cx="1675" cy="855" r="3" fill="#e8e8e8"/>
<rect x="1689" y="850" width="1" height="12" fill="#444"/>
<rect x="1693" y="850" width="1" height="12" fill="#444"/>
<rect x="1697" y="850" width="1" height="12" fill="#444"/>
<rect x="1701" y="850" width="1" height="12" fill="#444"/>
<rect x="1705" y="850" width="1" height="12" fill="#444"/>
<rect x="1731" y="841" width="28" height="31" fill="#f2f2f2"/>
<rect x="1732" y="842" width="5" height="5" fill="#dcdcdc"/>
<rect x="1748" y="842" width="5" height="5" fill="#dcdcdc"/>
<rect x="1740" y="850" width="5" height="5" fill="#dcdcdc"/>
<rect x="1756" y="850" width="5" height="5" fill="#dcdcdc"/>
<rect x="1732" y="858" width="5" height="5" fill="#dcdcdc"/>
<rect x="1748" y="858" width="5" height="5" fill="#dcdcdc"/>
<rect x="1740" y="866" width="5" height="5" fill="#dcdcdc"/>
<rect x="1756" y="866" width="5" height="5" fill="#dcdcdc"/>
<path d="M1737 845 L1740 863 M1753 845 L1750 863" stroke="#8a1a1a" stroke-width="3"/><path d="M1735 869 L1745.0 853 L1755 869" stroke="#e8a890" stroke-width="3" fill="none"/>
<path d="M1767 839 H1772 L1774 841 H1779 V850 H1767Z M1767 842 H1779" fill="none" stroke="#dcdcdc" stroke-width="1.3" opacity="1"/>
<path d="M1770 862 L1775 867 L1770 872" fill="none" stroke="#e0e0e0" stroke-width="1.6" opacity="1"/>
<path d="M1850 861 V854 H1861 V861Z" fill="#6a6a6a"/><path d="M1853 854 V850 Q1858 846 1861 851" fill="none" stroke="#6a6a6a" stroke-width="1.5"/>
<text x="1867" y="862" font-family="Liberation Serif" font-style="italic" font-size="17" fill="#6a6a6a">α</text>
<g fill="#6a6a6a"><rect x="1886" y="851" width="7" height="3"/><rect x="1894" y="851" width="7" height="3"/><rect x="1886" y="855" width="4" height="3"/><rect x="1891" y="855" width="6" height="3"/><rect x="1898" y="855" width="3" height="3"/><rect x="1886" y="859" width="7" height="3"/><rect x="1894" y="859" width="7" height="3"/></g>
<ellipse cx="1675" cy="894" rx="7.5" ry="5.5" fill="#d8d8d8"/><ellipse cx="1675" cy="895" rx="6" ry="3.5" fill="#2a2a2a"/><circle cx="1675" cy="893" r="3" fill="#e8e8e8"/>
<rect x="1689" y="888" width="1" height="12" fill="#444"/>
<rect x="1693" y="888" width="1" height="12" fill="#444"/>
<rect x="1697" y="888" width="1" height="12" fill="#444"/>
<rect x="1701" y="888" width="1" height="12" fill="#444"/>
<rect x="1705" y="888" width="1" height="12" fill="#444"/>
<rect x="1730" y="879" width="31" height="31" fill="#f2f2f2"/>
<rect x="1731" y="880" width="5" height="5" fill="#dcdcdc"/>
<rect x="1747" y="880" width="5" height="5" fill="#dcdcdc"/>
<rect x="1739" y="888" width="5" height="5" fill="#dcdcdc"/>
<rect x="1755" y="888" width="5" height="5" fill="#dcdcdc"/>
<rect x="1731" y="896" width="5" height="5" fill="#dcdcdc"/>
<rect x="1747" y="896" width="5" height="5" fill="#dcdcdc"/>
<rect x="1739" y="904" width="5" height="5" fill="#dcdcdc"/>
<rect x="1755" y="904" width="5" height="5" fill="#dcdcdc"/>
<ellipse cx="1745.5" cy="894.5" rx="6" ry="8" fill="#d890a0" opacity="0.7"/>
<path d="M1767 879 L1771 885 M1767 879 H1778 V888 H1772" fill="none" stroke="#dcdcdc" stroke-width="1.3" opacity="1"/>
<path d="M1850 899 V892 H1861 V899Z" fill="#6a6a6a"/><path d="M1853 892 V888 Q1858 884 1861 889" fill="none" stroke="#6a6a6a" stroke-width="1.5"/>
<text x="1867" y="900" font-family="Liberation Serif" font-style="italic" font-size="17" fill="#6a6a6a">α</text>
<g><rect x="1886" y="887" width="15" height="15" fill="#555"/><rect x="1886" y="887" width="5" height="5" fill="#777"/><rect x="1896" y="887" width="5" height="5" fill="#777"/><rect x="1891" y="892" width="5" height="5" fill="#777"/><rect x="1886" y="897" width="5" height="5" fill="#777"/><rect x="1896" y="897" width="5" height="5" fill="#777"/></g>
<ellipse cx="1675" cy="932" rx="7.5" ry="5.5" fill="#d8d8d8"/><ellipse cx="1675" cy="933" rx="6" ry="3.5" fill="#2a2a2a"/><circle cx="1675" cy="931" r="3" fill="#e8e8e8"/>
<rect x="1689" y="926" width="1" height="12" fill="#444"/>
<rect x="1693" y="926" width="1" height="12" fill="#444"/>
<rect x="1697" y="926" width="1" height="12" fill="#444"/>
<rect x="1701" y="926" width="1" height="12" fill="#444"/>
<rect x="1705" y="926" width="1" height="12" fill="#444"/>
<rect x="1709" y="926" width="1" height="12" fill="#444"/>
<rect x="1734" y="917" width="23" height="31" fill="#f2f2f2"/>
<rect x="1735" y="918" width="5" height="5" fill="#dcdcdc"/>
<rect x="1751" y="918" width="5" height="5" fill="#dcdcdc"/>
<rect x="1743" y="926" width="5" height="5" fill="#dcdcdc"/>
<rect x="1735" y="934" width="5" height="5" fill="#dcdcdc"/>
<rect x="1751" y="934" width="5" height="5" fill="#dcdcdc"/>
<rect x="1743" y="942" width="5" height="5" fill="#dcdcdc"/>
<ellipse cx="1745.5" cy="932.5" rx="6" ry="8" fill="#d890a0" opacity="0.7"/>
<path d="M1767 917 L1771 923 M1767 917 H1778 V926 H1772" fill="none" stroke="#dcdcdc" stroke-width="1.3" opacity="1"/>
<path d="M1850 937 V930 H1861 V937Z" fill="#6a6a6a"/><path d="M1853 930 V926 Q1858 922 1861 927" fill="none" stroke="#6a6a6a" stroke-width="1.5"/>
<text x="1867" y="938" font-family="Liberation Serif" font-style="italic" font-size="17" fill="#e8e8e8">α</text>
<path d="M1866 932 H1882" stroke="#e8e8e8" stroke-width="1.5"/>
<g><rect x="1886" y="925" width="15" height="15" fill="#555"/><rect x="1886" y="925" width="5" height="5" fill="#777"/><rect x="1896" y="925" width="5" height="5" fill="#777"/><rect x="1891" y="930" width="5" height="5" fill="#777"/><rect x="1886" y="935" width="5" height="5" fill="#777"/><rect x="1896" y="935" width="5" height="5" fill="#777"/></g>
<ellipse cx="1675" cy="970" rx="7.5" ry="5.5" fill="#d8d8d8"/><ellipse cx="1675" cy="971" rx="6" ry="3.5" fill="#2a2a2a"/><circle cx="1675" cy="969" r="3" fill="#e8e8e8"/>
<rect x="1689" y="964" width="1" height="12" fill="#444"/>
<rect x="1693" y="964" width="1" height="12" fill="#444"/>
<rect x="1697" y="964" width="1" height="12" fill="#444"/>
<rect x="1701" y="964" width="1" height="12" fill="#444"/>
<rect x="1705" y="964" width="1" height="12" fill="#444"/>
<rect x="1733" y="956" width="25" height="31" fill="#f2f2f2"/>
<rect x="1734" y="957" width="5" height="5" fill="#dcdcdc"/>
<rect x="1750" y="957" width="5" height="5" fill="#dcdcdc"/>
<rect x="1742" y="965" width="5" height="5" fill="#dcdcdc"/>
<rect x="1758" y="965" width="5" height="5" fill="#dcdcdc"/>
<rect x="1734" y="973" width="5" height="5" fill="#dcdcdc"/>
<rect x="1750" y="973" width="5" height="5" fill="#dcdcdc"/>
<rect x="1742" y="981" width="5" height="5" fill="#dcdcdc"/>
<rect x="1758" y="981" width="5" height="5" fill="#dcdcdc"/>
<path d="M1738 961 L1754 983" stroke="#e0a088" stroke-width="5"/>
<path d="M1767 955 L1771 961 M1767 955 H1778 V964 H1772" fill="none" stroke="#dcdcdc" stroke-width="1.3" opacity="1"/>
<path d="M1850 975 V968 H1861 V975Z" fill="#6a6a6a"/><path d="M1853 968 V964 Q1858 960 1861 965" fill="none" stroke="#6a6a6a" stroke-width="1.5"/>
<text x="1867" y="976" font-family="Liberation Serif" font-style="italic" font-size="17" fill="#6a6a6a">α</text>
<g><rect x="1886" y="963" width="15" height="15" fill="#555"/><rect x="1886" y="963" width="5" height="5" fill="#777"/><rect x="1896" y="963" width="5" height="5" fill="#777"/><rect x="1891" y="968" width="5" height="5" fill="#777"/><rect x="1886" y="973" width="5" height="5" fill="#777"/><rect x="1896" y="973" width="5" height="5" fill="#777"/></g>
 </g>
 <rect x="1905" y="191" width="12" height="790" fill="#2b2b2b"/>
 <rect x="1905" y="194" width="12" height="14" fill="#333" stroke="#262626"/>
 <path d="M1907 204 L1915 204 L1911 199Z" fill="#ccc"/>
 <rect x="1907" y="210" width="9" height="330" fill="#333" stroke="#282828"/>
 <rect x="1905" y="962" width="12" height="14" fill="#333" stroke="#262626"/>
 <path d="M1907 967 L1915 967 L1911 972Z" fill="#ccc"/>
 <!-- bottom buttons -->
 <g fill="none" stroke="#d8d8d8" stroke-width="1.6">
  <path d="M1678 984 V1001 M1669 992.5 H1687"/>
  <path d="M1713 988 V1001 H1726 M1716 985 H1730 V998 H1716Z"/>
  <path d="M1744 988 L1754 998 L1764 988"/>
  <path d="M1776 998 L1786 988 L1796 998"/>
  <path d="M1808 986 H1828 M1808 993 H1828 M1808 1000 H1828"/>
 </g>
 <g fill="#d8d8d8"><rect x="1820" y="984" width="3" height="4"/><rect x="1812" y="991" width="3" height="4"/><rect x="1822" y="998" width="3" height="4"/></g>
 <path d="M1696 991 L1702 991 L1699 994Z M1836 991 L1842 991 L1839 994Z" fill="#bbb"/>
 <path d="M1897 985 H1909 M1901 983 H1905 M1898 988 H1908 L1907 1001 H1899Z" fill="#d8d8d8" stroke="#d8d8d8" stroke-width="1"/>
</svg>
<div class="t" style="left:1741px;top:205px;font-size:11px;color:#d0d0d0;font-weight:normal">图层组 10</div>
<div class="t" style="left:1749px;top:243px;font-size:11px;color:#777;font-weight:normal">颜料图层 8</div>
<div class="t" style="left:1749px;top:281px;font-size:11px;color:#777;font-weight:normal">图层组 9</div>
<div class="t" style="left:1749px;top:319px;font-size:11px;color:#d0d0d0;font-weight:normal">图层组 13</div>
<div class="t" style="left:1757px;top:357px;font-size:11px;color:#777;font-weight:normal">颜料图层 15</div>
<div class="t" style="left:1757px;top:395px;font-size:11px;color:#777;font-weight:normal">线稿</div>
<div class="t" style="left:1757px;top:433px;font-size:11px;color:#d0d0d0;font-weight:normal">颜料图层 107</div>
<div class="t" style="left:1757px;top:471px;font-size:11px;color:#d0d0d0;font-weight:normal">图层组 19</div>
<div class="t" style="left:1765px;top:509px;font-size:11px;color:#d0d0d0;font-weight:normal">颜料图层 100</div>
<div class="t" style="left:1765px;top:547px;font-size:11px;color:#d0d0d0;font-weight:normal">图层组 23</div>
<div class="t" style="left:1773px;top:585px;font-size:11px;color:#d0d0d0;font-weight:normal">头部</div>
<div class="t" style="left:1773px;top:623px;font-size:11px;color:#d0d0d0;font-weight:normal">上衣</div>
<div class="t" style="left:1773px;top:661px;font-size:11px;color:#d0d0d0;font-weight:normal">颜料图层 69</div>
<div class="t" style="left:1773px;top:699px;font-size:11px;color:#d0d0d0;font-weight:normal">蜡烛和手</div>
<div class="t" style="left:1781px;top:737px;font-size:11px;color:#f0f0f0;font-weight:bold">图层组 109</div>
<div class="t" style="left:1781px;top:775px;font-size:11px;color:#d0d0d0;font-weight:normal">蜡烛和手</div>
<div class="t" style="left:1781px;top:813px;font-size:11px;color:#d0d0d0;font-weight:normal">图层组 72</div>
<div class="t" style="left:1781px;top:851px;font-size:11px;color:#d0d0d0;font-weight:normal">蜡烛和手</div>
<div class="t" style="left:1781px;top:889px;font-size:11px;color:#d0d0d0;font-weight:normal">颜料图层 71</div>
<div class="t" style="left:1781px;top:927px;font-size:11px;color:#d0d0d0;font-weight:normal">颜料图层 70</div>
<div class="t" style="left:1781px;top:965px;font-size:11px;color:#d0d0d0;font-weight:normal">左手(确信</div>
<!-- status bar -->
<div class="a" style="left:0;top:1008px;width:1920px;height:32px;background:#313131">
 <svg class="a" style="left:7px;top:8px" width="16" height="16"><rect x="1" y="1" width="14" height="14" fill="none" stroke="#bbb" stroke-width="1"/><circle cx="8" cy="8" r="4" fill="none" stroke="#999" stroke-dasharray="1.5 1.5"/></svg>
 <div class="t" style="left:37px;top:10px;font-size:12px;color:#c8c8c8">水彩5-扁平倾斜大颗粒</div>
 <div class="t" style="left:488px;top:10px;font-size:12px;color:#c8c8c8">RGB/透明度 (8 位整数/通道)&nbsp; sRGB-elle-V2-srgbtrc.icc</div>
 <div class="a" style="left:1444px;top:6px;width:137px;height:22px;background:#2c2c2c;border-radius:2px"></div>
 <div class="a" style="left:1445px;top:7px;width:34px;height:20px;background:#3e3e3e"></div>
 <div class="t" style="left:1447px;top:10px;font-size:12px;color:#c8c8c8">3,508 <u>x</u> 3,070 (1.1 GiB)</div>
 <svg class="a" style="left:1588px;top:4px" width="26" height="26"><circle cx="13" cy="13" r="12" fill="#1e1e1e"/><path d="M6 13 H20 M6 10 V16 M20 11 L20 15" stroke="#ddd" stroke-width="1.5"/></svg>
 <div class="t" style="left:1619px;top:10px;font-size:12px;color:#c8c8c8">0.00°</div>
 <div class="t" style="left:1760px;top:10px;font-size:12px;color:#c8c8c8">25.0%</div>
 <div class="a" style="left:1812px;top:15px;width:83px;height:3px;background:#262626;border-radius:2px"></div>
 <div class="a" style="left:1812px;top:15px;width:15px;height:3px;background:#5a6a9a"></div>
 <div class="a" style="left:1826px;top:10px;width:11px;height:13px;background:#2e2e2e;border:1px solid #444;border-radius:2px"></div>
 <svg class="a" style="left:1898px;top:8px" width="18" height="17"><rect x="1" y="1" width="16" height="11" fill="none" stroke="#ccc" stroke-width="1.3"/><path d="M9 12 V15 M4 16 H14" stroke="#ccc" stroke-width="1.3"/><circle cx="9" cy="6.5" r="1.5" fill="#ccc"/></svg>
</div>
<!-- taskbar -->
<div class="a" style="left:0;top:1040px;width:1920px;height:40px;overflow:hidden;background:linear-gradient(180deg,#343c48 0%,#28303a 50%,#222830 100%)">
 <div class="a" style="left:0;top:0;width:1920px;height:1px;background:#6a7480"></div>
 <div class="a" style="left:300px;top:5px;width:500px;height:40px;background:radial-gradient(ellipse at 50% 50%,#3a424e,transparent 70%);opacity:0.6"></div>
 <div class="a" style="left:60px;top:1px;width:58px;height:37px;border:1px solid #707880;border-radius:3px;background:linear-gradient(160deg,#6a6e74,#3a3e44 60%,#2a2e34)"></div>
 <div class="a" style="left:122px;top:1px;width:58px;height:37px;border:1px solid #707880;border-radius:3px;background:linear-gradient(160deg,#6a6e74,#3a3e44 60%,#2a2e34)"></div>
 <div class="a" style="left:308px;top:1px;width:58px;height:37px;border:1px solid #9aa0a8;border-radius:3px;background:linear-gradient(160deg,#a8acb0,#6a6e74 60%,#5a5e64)"></div>
 <div class="a" style="left:680px;top:1px;width:58px;height:37px;border:1px solid #9aa0a8;border-radius:3px;background:linear-gradient(160deg,#a8acb0,#6a6e74 60%,#5a5e64)"></div>
 <svg class="a" style="left:0;top:0" width="1920" height="40">
  <!-- start orb -->
  <circle cx="27" cy="21" r="18" fill="#1a5a90"/><circle cx="27" cy="21" r="17" fill="url(#orb)"/>
  <defs><radialGradient id="orb" cx="0.5" cy="0.3" r="0.7"><stop offset="0" stop-color="#80c8f0"/><stop offset="0.5" stop-color="#2a78b8"/><stop offset="1" stop-color="#0a3a70"/></radialGradient></defs>
  <path d="M19 14 Q23 12 26 14 V20 Q23 18 19 20Z" fill="#f05a28"/><path d="M28 14 Q32 12 36 14 V20 Q32 18 28 20Z" fill="#7ac040"/>
  <path d="M19 22 Q23 20 26 22 V28 Q23 26 19 28Z" fill="#28a0e8"/><path d="M28 22 Q32 20 36 22 V28 Q32 26 28 28Z" fill="#f8c020"/>
  <!-- chrome -->
  <circle cx="89" cy="20" r="16" fill="#de4a3a"/>
  <path d="M89 20 L75 28 A16 16 0 0 0 97 34.5Z" fill="#2aa04a"/>
  <path d="M89 20 L97 34.5 A16 16 0 0 0 103 12 L89 12Z" fill="#f8c020"/>
  <circle cx="89" cy="20" r="7.5" fill="#fff"/><circle cx="89" cy="20" r="5.8" fill="#3a78e0"/>
  <!-- telegram -->
  <circle cx="150" cy="20" r="15" fill="#2c9ad8"/>
  <path d="M141 20 L159 12 L155 29 L150 24Z" fill="#fff"/>
  <rect x="151" y="24" width="16" height="11" fill="#e03030"/><text x="153" y="33" font-size="9" fill="#fff" font-family="Liberation Sans">95</text>
  <!-- photo app -->
  <circle cx="212" cy="20" r="14" fill="#eee"/><circle cx="212" cy="20" r="12" fill="#e85a7a"/>
  <path d="M212 20 L212 8 A12 12 0 0 1 222.4 14Z" fill="#f0a030"/><path d="M212 20 L222.4 14 A12 12 0 0 1 222.4 26Z" fill="#58c0e0"/><path d="M212 20 L222.4 26 A12 12 0 0 1 212 32Z" fill="#7ac050"/><path d="M212 20 L212 32 A12 12 0 0 1 201.6 26Z" fill="#9a60c0"/><path d="M212 20 L201.6 26 A12 12 0 0 1 201.6 14Z" fill="#e85050"/>
  <!-- clip studio -->
  <rect x="259" y="5" width="32" height="31" rx="6" fill="#ececec"/>
  <path d="M267 18 Q267 10 276 10 Q284 10 284 17 Q284 23 276 23 L272 23 Q270 26 274 29" stroke="#222" stroke-width="3.5" fill="none"/>
  <!-- krita -->
  <circle cx="338" cy="22" r="13" fill="#e040d0"/><path d="M325 22 A13 13 0 0 0 351 22 L338 22Z" fill="#38c8e8"/><circle cx="344" cy="27" r="5" fill="#e8e040"/>
  <path d="M322 10 L344 30" stroke="#222" stroke-width="3"/>
  <!-- PS -->
  <rect x="385" y="8" width="28" height="26" fill="#001830" stroke="#30b0f0" stroke-width="2"/>
  <text x="390" y="28" font-size="15" fill="#30b0f0" font-family="Liberation Sans">Ps</text>
  <!-- calculator -->
  <rect x="449" y="7" width="22" height="29" rx="2" fill="#c8e0f0" stroke="#8aa8c8"/><rect x="452" y="11" width="16" height="6" fill="#e8f0f8"/>
  <g fill="#5a7aa0"><rect x="452" y="20" width="3" height="3"/><rect x="457" y="20" width="3" height="3"/><rect x="462" y="20" width="3" height="3"/><rect x="452" y="25" width="3" height="3"/><rect x="457" y="25" width="3" height="3"/><rect x="462" y="25" width="3" height="3"/><rect x="452" y="30" width="3" height="3"/><rect x="457" y="30" width="3" height="3"/><rect x="462" y="30" width="3" height="3"/></g>
  <!-- pencil -->
  <path d="M522 6 L530 30 L514 30Z" fill="#e8b890"/><path d="M518 30 Q522 20 526 30Z" fill="#e02020"/>
  <!-- paint palette -->
  <ellipse cx="582" cy="22" rx="14" ry="11" fill="#c8dcec"/><circle cx="575" cy="19" r="2.5" fill="#e03030"/><circle cx="580" cy="15" r="2.5" fill="#40a040"/><circle cx="586" cy="16" r="2.5" fill="#f0c030"/><circle cx="582" cy="24" r="2" fill="#223"/>
  <path d="M588 31 L598 10" stroke="#e8a040" stroke-width="3"/>
  <!-- cat -->
  <path d="M640 17 L640 10 L645 14 L651 14 L655 10 L655 17 L655 30 L640 30Z" fill="#1a3060"/><circle cx="645" cy="20" r="1" fill="#ccc"/><circle cx="650" cy="20" r="1" fill="#ccc"/>
  <!-- explorer -->
  <rect x="693" y="10" width="32" height="20" fill="#f0d070"/><rect x="697" y="23" width="24" height="13" fill="#80b8e8"/><rect x="701" y="27" width="16" height="9" fill="#f0d070"/>
  <!-- tray -->
  <text x="1462" y="26" font-size="12" fill="#e0e0e0" font-family="Liberation Mono">CH</text>
  <rect x="1485" y="15" width="15" height="10" fill="#aaa" stroke="#ddd" stroke-width="0.5"/>
  <circle cx="1514" cy="20" r="8" fill="#2a5ad0" stroke="#ddd" stroke-width="1"/><text x="1510" y="25" font-size="11" fill="#fff" font-family="Liberation Sans" font-weight="bold">?</text>
  <path d="M1531 8 H1539 V13 H1531Z M1532 20 L1535 24 L1538 20Z" fill="none" stroke="#ddd" stroke-width="1.2"/>
  <circle cx="1554" cy="17" r="5" fill="#ddd"/><rect x="1555" y="21" width="9" height="9" fill="#e03030"/>
  <path d="M1574 20 L1581 13 L1588 20 L1581 27Z" fill="none" stroke="#d88030" stroke-width="3"/>
  <rect x="1597" y="13" width="16" height="14" fill="#f0b040"/><rect x="1597" y="13" width="16" height="4" fill="#c84020"/>
  <path d="M1622 11 L1630 9 L1638 11 L1638 20 Q1634 28 1630 30 Q1626 28 1622 20Z" fill="#f0a030"/>
  <path d="M1647 13 L1649 8 L1652 12 L1657 12 L1660 8 L1662 13 L1662 28 L1647 28Z" fill="#e8c8a0"/>
  <path d="M1670 12 Q1678 8 1685 12 L1685 24 Q1678 30 1670 24Z" fill="#2aa050"/><circle cx="1678" cy="19" r="3" fill="#fff"/>
  <circle cx="1701" cy="20" r="9" fill="#3a8ae0"/><rect x="1701" y="17" width="9" height="9" fill="#e04040"/>
  <circle cx="1725" cy="15" r="5" fill="#222"/><ellipse cx="1725" cy="24" rx="6" ry="5" fill="#e83020"/><rect x="1728" y="19" width="9" height="8" fill="#f0c020"/>
  <path d="M1745 12 V26 M1749 14 H1760 V25 H1749Z M1751 29 H1759" stroke="#ddd" stroke-width="1.5" fill="none"/>
  <path d="M1768 20 L1776 12 V28Z" fill="#e06040"/>
  <path d="M1791 16 H1795 L1800 11 V29 L1795 24 H1791Z" fill="#ddd"/><path d="M1803 15 Q1806 20 1803 25" stroke="#ddd" fill="none"/>
  <rect x="1873" y="2" width="47" height="38" fill="#2a3038" stroke="#5a6470"/>
 </svg>
 <div class="t" style="left:1825px;top:6px;font-size:12px;color:#f0f0f0">下午 07:22</div>
 <div class="t" style="left:1825px;top:23px;font-size:12px;color:#f0f0f0">2022/12/4</div>
</div>
<svg class="a" style="left:0;top:0" width="1920" height="1080">
 <g fill="#8a8a8a"><rect x="1453" y="537" width="1.5" height="1.5"/><rect x="1659" y="537" width="1.5" height="1.5"/><rect x="1453" y="540" width="1.5" height="1.5"/><rect x="1659" y="540" width="1.5" height="1.5"/><rect x="1453" y="543" width="1.5" height="1.5"/><rect x="1659" y="543" width="1.5" height="1.5"/><rect x="1453" y="546" width="1.5" height="1.5"/><rect x="1659" y="546" width="1.5" height="1.5"/><rect x="1453" y="549" width="1.5" height="1.5"/><rect x="1659" y="549" width="1.5" height="1.5"/><rect x="1453" y="552" width="1.5" height="1.5"/><rect x="1659" y="552" width="1.5" height="1.5"/><rect x="1453" y="555" width="1.5" height="1.5"/><rect x="1659" y="555" width="1.5" height="1.5"/></g>
 <rect x="1643" y="592" width="8" height="166" fill="none" stroke="#3a3a3a"/>
</svg>
</body></html>
